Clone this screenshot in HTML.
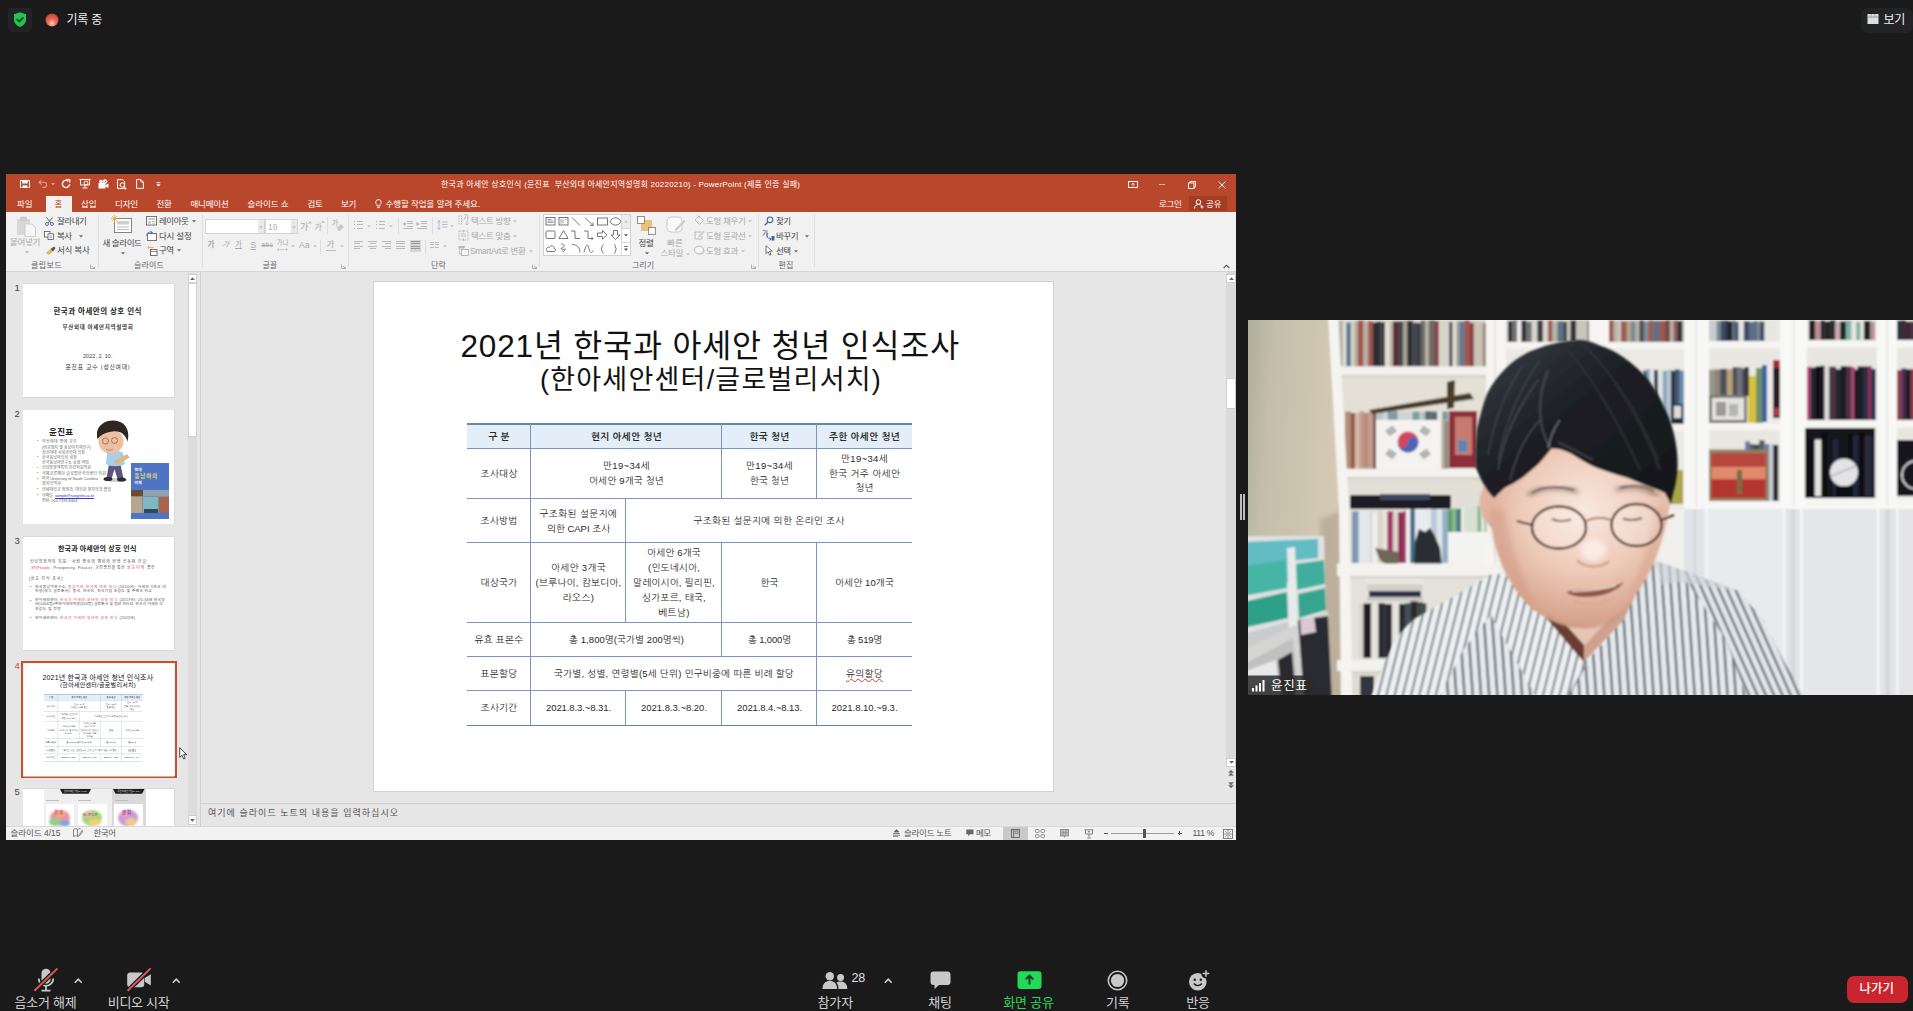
<!DOCTYPE html>
<html lang="ko">
<head>
<meta charset="utf-8">
<title>Zoom</title>
<style>
*{box-sizing:border-box;margin:0;padding:0}
html,body{width:1913px;height:1011px;overflow:hidden;background:#1a1a1a}
body{position:relative;font-family:"Liberation Sans","Noto Sans CJK KR",sans-serif;color:#fff}
.abs{position:absolute}
.k{font-family:"Liberation Sans","Noto Sans CJK KR",sans-serif}
.n{font-family:"Liberation Sans","NanumGothic","Noto Sans CJK KR",sans-serif}
/* ---------- PowerPoint window ---------- */
#ppt{position:absolute;left:6px;top:174px;width:1230px;height:666px;background:#e6e6e6;overflow:hidden;color:#444}
#ppt .title{position:absolute;left:0;top:0;width:1230px;height:38px;background:#b9472b}
#ppt .ribbon{position:absolute;left:0;top:38px;width:1230px;height:60px;background:#f1f1f2;border-bottom:1px solid #d4d4d6}
#ppt .t{position:absolute;white-space:nowrap;line-height:1}
/* ---------- slide ---------- */
/* ---------- thumbs ---------- */
/* ---------- zoom toolbar ---------- */
</style>
</head>
<body>

<!-- top-left status -->
<svg class="abs" style="left:8px;top:8px" width="24" height="24" viewBox="0 0 24 24"><rect x="0" y="0" width="24" height="24" rx="4" fill="#222325"/><path d="M12 4.2 L18 6.3 V11.5 C18 15 15.5 17.6 12 19 C8.500 17.6 6 15 6 11.500 V6.300 Z" fill="#23c552"/><path d="M9.3 11.600 L11.300 13.600 L14.900 9.900" stroke="#1f3d2a" stroke-width="1.700" fill="none" stroke-linecap="round" stroke-linejoin="round"/></svg>
<svg class="abs" style="left:44px;top:12px" width="16" height="16" viewBox="0 0 16 16"><defs><radialGradient id="rg" cx="50%" cy="75%" r="70%"><stop offset="0" stop-color="#ffd0c4"/><stop offset="0.450" stop-color="#e8695a"/><stop offset="1" stop-color="#c8473c"/></radialGradient></defs><circle cx="8" cy="8" r="6.500" fill="url(#rg)"/></svg>
<div class="abs k" style="left:66.500px;top:13.500px;font-size:12px;line-height:1;color:#f0f0f0;white-space:nowrap;letter-spacing:-0.200px">기록 중</div>

<!-- top-right view -->
<div class="abs" style="left:1861px;top:7.500px;width:52px;height:25px;border-radius:7px;background:#222325"></div>
<svg class="abs" style="left:1867px;top:13px" width="12" height="12" viewBox="0 0 12 12"><rect x="0.500" y="1" width="11" height="10" fill="#dedede"/><rect x="0.500" y="3.600" width="11" height="0.800" fill="#888"/><rect x="3.800" y="1" width="0.700" height="2.600" fill="#888"/><rect x="7.500" y="1" width="0.700" height="2.600" fill="#888"/></svg>
<div class="abs k" style="left:1883.500px;top:13.500px;font-size:12px;line-height:1;color:#f0f0f0;white-space:nowrap;letter-spacing:-0.300px">보기</div>

<!--PPT-->
<div id="ppt">
<div class="title"></div>
<div class="ribbon"></div>
<svg style="position:absolute;left:13.5px;top:5.5px;" width="10" height="8.5" viewBox="0 0 10 8.5"><path d="M0.5 0.5h9v7.5h-9z" fill="none" stroke="#fff" stroke-width="1"/><rect x="2.2" y="0.5" width="5.6" height="3" fill="#fff"/><rect x="2.5" y="5.4" width="5" height="2.6" fill="#fff"/></svg>
<svg style="position:absolute;left:32.0px;top:5.0px;" width="10" height="9" viewBox="0 0 10 9"><path d="M1 3.2h5a2.6 2.6 0 0 1 0 5.200h-1.500" fill="none" stroke="#e59b87" stroke-width="1.100"/><path d="M3.600 0.800L1 3.200l2.600 2.400" fill="none" stroke="#e59b87" stroke-width="1.100"/></svg>
<svg style="position:absolute;left:45.0px;top:9.0px;" width="4" height="3" viewBox="0 0 4 3"><path d="M0 0h4l-2 2.500z" fill="#e59b87"/></svg>
<svg style="position:absolute;left:54.5px;top:4.5px;" width="10" height="10" viewBox="0 0 10 10"><path d="M7.300 2.200A3.600 3.600 0 1 0 8.600 5" fill="none" stroke="#fff" stroke-width="1.300"/><path d="M5.300 0.300h3.400v3.400" fill="none" stroke="#fff" stroke-width="1.200"/></svg>
<svg style="position:absolute;left:73.0px;top:5.0px;" width="12" height="10" viewBox="0 0 12 10"><path d="M0.500 0.500h11M1.500 0.500v5.500h9v-5.500M6 6v2.500M3.500 9h5" stroke="#fff" stroke-width="1" fill="none"/><circle cx="7" cy="4" r="2" fill="none" stroke="#fff" stroke-width="0.900"/></svg>
<svg style="position:absolute;left:92.0px;top:4.5px;" width="11" height="10.5" viewBox="0 0 11 10.5"><rect x="0.500" y="4" width="7" height="5.500" fill="#fff"/><circle cx="3" cy="2.500" r="1.800" fill="#fff"/><circle cx="7" cy="2.500" r="2.300" fill="#fff"/><path d="M7.500 6l3-1.500v4.500l-3-1.500z" fill="#fff"/><path d="M5.800 2.500l1 1 1.700-2" stroke="#b9472b" stroke-width="0.800" fill="none"/></svg>
<svg style="position:absolute;left:111.0px;top:4.5px;" width="10" height="11" viewBox="0 0 10 11"><path d="M0.600 0.600h5l2 2v7h-7z" fill="none" stroke="#fff" stroke-width="1"/><circle cx="5.300" cy="6" r="2.200" fill="#b9472b" stroke="#fff" stroke-width="1"/><path d="M7 7.800l2.300 2.500" stroke="#fff" stroke-width="1.200"/></svg>
<svg style="position:absolute;left:129.5px;top:5.0px;" width="8" height="10" viewBox="0 0 8 10"><path d="M0.600 0.600h4.300l2.500 2.500v6.300h-6.800z" fill="none" stroke="#fff" stroke-width="1"/><path d="M4.900 0.600v2.500h2.500" fill="none" stroke="#fff" stroke-width="0.800"/></svg>
<svg style="position:absolute;left:150.0px;top:8.0px;" width="5" height="5" viewBox="0 0 5 5"><path d="M0.500 0.700h4" stroke="#fff" stroke-width="0.900"/><path d="M0.300 2.300h4.400l-2.200 2.300z" fill="#fff"/></svg>
<div style="position:absolute;left:435.0px;top:6.7px;font-size:8.0px;line-height:8.0px;color:#fff;white-space:nowrap;font-family:'Liberation Sans','Noto Sans CJK KR',sans-serif;letter-spacing:0.22px;white-space:pre;">한국과 아세안 상호인식 (윤진표  부산외대 아세안지역설명회 20220210) - PowerPoint (제품 인증 실패)</div>
<svg style="position:absolute;left:1121.5px;top:7.0px;" width="10" height="7" viewBox="0 0 10 7"><rect x="0.500" y="0.500" width="9" height="6" fill="none" stroke="#fff" stroke-width="1"/><path d="M5 5.500v-3M3.600 3.600l1.400-1.400 1.400 1.400" stroke="#fff" stroke-width="0.800" fill="none"/></svg>
<div style="position:absolute;left:1153.0px;top:10.0px;width:6.0px;height:1.0px;background:#e9b5a6;"></div>
<svg style="position:absolute;left:1182.0px;top:6.5px;" width="8" height="8" viewBox="0 0 8 8"><rect x="0.500" y="2" width="5.500" height="5.500" fill="none" stroke="#fff" stroke-width="0.900"/><path d="M2 2v-1.500h5.500v5.500h-1.500" fill="none" stroke="#fff" stroke-width="0.900"/></svg>
<svg style="position:absolute;left:1211.5px;top:6.5px;" width="8" height="8" viewBox="0 0 8 8"><path d="M0.700 0.700l6.600 6.600M7.300 0.700l-6.600 6.600" stroke="#fff" stroke-width="1"/></svg>
<div style="position:absolute;left:40.0px;top:22.0px;width:25.5px;height:16.0px;background:#f1f1f2;"></div>
<div style="position:absolute;left:11.0px;top:25.5px;font-size:8.5px;line-height:8.5px;color:#fff;white-space:nowrap;font-family:'Liberation Sans','Noto Sans CJK KR',sans-serif;letter-spacing:-0.07px;">파일</div>
<div style="position:absolute;left:48.5px;top:25.5px;font-size:8.5px;line-height:8.5px;color:#b9472b;white-space:nowrap;font-family:'Liberation Sans','Noto Sans CJK KR',sans-serif;letter-spacing:0.17px;">홈</div>
<div style="position:absolute;left:75.0px;top:25.5px;font-size:8.5px;line-height:8.5px;color:#fff;white-space:nowrap;font-family:'Liberation Sans','Noto Sans CJK KR',sans-serif;letter-spacing:-0.07px;">삽입</div>
<div style="position:absolute;left:109.0px;top:25.5px;font-size:8.5px;line-height:8.5px;color:#fff;white-space:nowrap;font-family:'Liberation Sans','Noto Sans CJK KR',sans-serif;letter-spacing:-0.16px;">디자인</div>
<div style="position:absolute;left:150.5px;top:25.5px;font-size:8.5px;line-height:8.5px;color:#fff;white-space:nowrap;font-family:'Liberation Sans','Noto Sans CJK KR',sans-serif;letter-spacing:-0.32px;">전환</div>
<div style="position:absolute;left:184.5px;top:25.5px;font-size:8.5px;line-height:8.5px;color:#fff;white-space:nowrap;font-family:'Liberation Sans','Noto Sans CJK KR',sans-serif;letter-spacing:-0.22px;">애니메이션</div>
<div style="position:absolute;left:241.5px;top:25.5px;font-size:8.5px;line-height:8.5px;color:#fff;white-space:nowrap;font-family:'Liberation Sans','Noto Sans CJK KR',sans-serif;letter-spacing:-0.08px;">슬라이드 쇼</div>
<div style="position:absolute;left:301.5px;top:25.5px;font-size:8.5px;line-height:8.5px;color:#fff;white-space:nowrap;font-family:'Liberation Sans','Noto Sans CJK KR',sans-serif;letter-spacing:-0.32px;">검토</div>
<div style="position:absolute;left:335.0px;top:25.5px;font-size:8.5px;line-height:8.5px;color:#fff;white-space:nowrap;font-family:'Liberation Sans','Noto Sans CJK KR',sans-serif;letter-spacing:-0.32px;">보기</div>
<svg style="position:absolute;left:369.0px;top:24.5px;" width="7" height="10" viewBox="0 0 7 10"><path d="M3.500 0.600a2.700 2.700 0 0 1 1.500 5v1.400h-3v-1.400a2.700 2.700 0 0 1 1.500-5z" fill="none" stroke="#fff" stroke-width="0.900"/><path d="M2.300 8.600h2.400" stroke="#fff" stroke-width="0.900"/></svg>
<div style="position:absolute;left:379.5px;top:25.5px;font-size:8.5px;line-height:8.5px;color:#fff;white-space:nowrap;font-family:'Liberation Sans','Noto Sans CJK KR',sans-serif;letter-spacing:-0.06px;">수행할 작업을 알려 주세요.</div>
<div style="position:absolute;left:1153.0px;top:25.5px;font-size:8.5px;line-height:8.5px;color:#fff;white-space:nowrap;font-family:'Liberation Sans','Noto Sans CJK KR',sans-serif;letter-spacing:-0.32px;">로그인</div>
<div style="position:absolute;left:1182.5px;top:21.5px;width:38.0px;height:15.0px;background:#a23c22;"></div>
<svg style="position:absolute;left:1187.5px;top:24.5px;" width="10" height="10" viewBox="0 0 10 10"><circle cx="4.500" cy="3" r="2.300" fill="none" stroke="#fff" stroke-width="1"/><path d="M0.600 9.500c0-3 1.800-4 3.900-4s2.500 0.600 3 1.300" fill="none" stroke="#fff" stroke-width="1"/><path d="M8 6.500v3M6.500 8h3" stroke="#fff" stroke-width="0.900"/></svg>
<div style="position:absolute;left:1200.0px;top:25.5px;font-size:8.5px;line-height:8.5px;color:#fff;white-space:nowrap;font-family:'Liberation Sans','Noto Sans CJK KR',sans-serif;letter-spacing:-0.07px;">공유</div>

<div style="position:absolute;left:91.5px;top:41.0px;width:1.0px;height:52.0px;background:#dedede;"></div>
<div style="position:absolute;left:196.0px;top:41.0px;width:1.0px;height:52.0px;background:#dedede;"></div>
<div style="position:absolute;left:342.0px;top:41.0px;width:1.0px;height:52.0px;background:#dedede;"></div>
<div style="position:absolute;left:533.0px;top:41.0px;width:1.0px;height:52.0px;background:#dedede;"></div>
<div style="position:absolute;left:752.0px;top:41.0px;width:1.0px;height:52.0px;background:#dedede;"></div>
<div style="position:absolute;left:807.5px;top:41.0px;width:1.0px;height:52.0px;background:#dedede;"></div>
<div style="position:absolute;left:25.0px;top:87.7px;font-size:8.0px;line-height:8.0px;color:#666;white-space:nowrap;font-family:'Liberation Sans','Noto Sans CJK KR',sans-serif;letter-spacing:0.39px;">클립보드</div>
<div style="position:absolute;left:128.0px;top:87.7px;font-size:8.0px;line-height:8.0px;color:#666;white-space:nowrap;font-family:'Liberation Sans','Noto Sans CJK KR',sans-serif;letter-spacing:0.14px;">슬라이드</div>
<div style="position:absolute;left:256.5px;top:87.7px;font-size:8.0px;line-height:8.0px;color:#666;white-space:nowrap;font-family:'Liberation Sans','Noto Sans CJK KR',sans-serif;letter-spacing:-0.12px;">글꼴</div>
<div style="position:absolute;left:425.0px;top:87.7px;font-size:8.0px;line-height:8.0px;color:#666;white-space:nowrap;font-family:'Liberation Sans','Noto Sans CJK KR',sans-serif;letter-spacing:0.13px;">단락</div>
<div style="position:absolute;left:626.0px;top:87.7px;font-size:8.0px;line-height:8.0px;color:#666;white-space:nowrap;font-family:'Liberation Sans','Noto Sans CJK KR',sans-serif;letter-spacing:-0.03px;">그리기</div>
<div style="position:absolute;left:772.5px;top:87.7px;font-size:8.0px;line-height:8.0px;color:#666;white-space:nowrap;font-family:'Liberation Sans','Noto Sans CJK KR',sans-serif;letter-spacing:0.13px;">편집</div>
<svg style="position:absolute;left:83.5px;top:89.5px;" width="5" height="5" viewBox="0 0 5 5"><path d="M0.500 0.500h4v4" fill="none" stroke="#999" stroke-width="0.700" transform="rotate(180 2.500 2.500)"/><path d="M2 2l2.500 2.500M4.500 2.800v1.700h-1.700" stroke="#999" stroke-width="0.700" fill="none"/></svg>
<svg style="position:absolute;left:334.5px;top:89.5px;" width="5" height="5" viewBox="0 0 5 5"><path d="M0.500 0.500h4v4" fill="none" stroke="#999" stroke-width="0.700" transform="rotate(180 2.500 2.500)"/><path d="M2 2l2.500 2.500M4.500 2.800v1.700h-1.700" stroke="#999" stroke-width="0.700" fill="none"/></svg>
<svg style="position:absolute;left:525.5px;top:89.5px;" width="5" height="5" viewBox="0 0 5 5"><path d="M0.500 0.500h4v4" fill="none" stroke="#999" stroke-width="0.700" transform="rotate(180 2.500 2.500)"/><path d="M2 2l2.500 2.500M4.500 2.800v1.700h-1.700" stroke="#999" stroke-width="0.700" fill="none"/></svg>
<svg style="position:absolute;left:744.5px;top:89.5px;" width="5" height="5" viewBox="0 0 5 5"><path d="M0.500 0.500h4v4" fill="none" stroke="#999" stroke-width="0.700" transform="rotate(180 2.500 2.500)"/><path d="M2 2l2.500 2.500M4.500 2.800v1.700h-1.700" stroke="#999" stroke-width="0.700" fill="none"/></svg>
<svg style="position:absolute;left:1216.5px;top:90.0px;" width="7" height="5" viewBox="0 0 7 5"><path d="M0.700 4l2.800-2.800 2.800 2.800" fill="none" stroke="#555" stroke-width="1.100"/></svg>
<svg style="position:absolute;left:10.0px;top:42.0px;" width="21" height="21" viewBox="0 0 21 21"><rect x="1" y="3" width="13" height="16" rx="1" fill="#d9d9d9"/><rect x="4.500" y="1" width="6" height="4" rx="1" fill="#cfcfcf" stroke="#bdbdbd" stroke-width="0.600"/><path d="M9 8h7l3.500 3.500v9h-10.500z" fill="#f6f6f6" stroke="#c4c4c4" stroke-width="0.800"/></svg>
<div style="position:absolute;left:4.0px;top:64.0px;font-size:8.5px;line-height:8.5px;color:#a9a9a9;white-space:nowrap;font-family:'Liberation Sans','Noto Sans CJK KR',sans-serif;letter-spacing:-0.32px;">붙여넣기</div>
<svg style="position:absolute;left:18.5px;top:77.0px;" width="4" height="3" viewBox="0 0 4 3"><path d="M0 0.300h4l-2 2.200z" fill="#b5b5b5"/></svg>
<svg style="position:absolute;left:38.5px;top:42.5px;" width="9" height="9" viewBox="0 0 9 9"><path d="M1.500 0.500l4.500 5.500M7.500 0.500l-4.500 5.500" stroke="#555" stroke-width="0.900"/><circle cx="2" cy="7" r="1.500" fill="none" stroke="#41649a" stroke-width="0.900"/><circle cx="7" cy="7" r="1.500" fill="none" stroke="#41649a" stroke-width="0.900"/></svg>
<div style="position:absolute;left:51.0px;top:43.0px;font-size:8.5px;line-height:8.5px;color:#444;white-space:nowrap;font-family:'Liberation Sans','Noto Sans CJK KR',sans-serif;letter-spacing:-0.45px;">잘라내기</div>
<svg style="position:absolute;left:38.0px;top:57.0px;" width="11" height="9" viewBox="0 0 11 9"><rect x="0.500" y="0.500" width="5.500" height="5.500" fill="#fff" stroke="#555" stroke-width="0.800"/><rect x="4" y="2.800" width="5.500" height="5.700" fill="#fff" stroke="#555" stroke-width="0.800"/><path d="M5.500 5h2.500M5.500 6.700h2.500" stroke="#41649a" stroke-width="0.600"/></svg>
<div style="position:absolute;left:51.0px;top:57.5px;font-size:8.5px;line-height:8.5px;color:#444;white-space:nowrap;font-family:'Liberation Sans','Noto Sans CJK KR',sans-serif;letter-spacing:-0.57px;">복사</div>
<svg style="position:absolute;left:72.5px;top:60.5px;" width="4" height="3" viewBox="0 0 4 3"><path d="M0 0.300h4l-2 2.200z" fill="#666"/></svg>
<svg style="position:absolute;left:39.0px;top:71.5px;" width="11" height="10" viewBox="0 0 11 10"><path d="M1 6.500l4.500-3.500 2.500 2.500-4.500 3.500z" fill="#e2b85c"/><path d="M5.500 3l3.500-2.500 1.500 1.500-2.500 3.500z" fill="#555"/></svg>
<div style="position:absolute;left:51.0px;top:72.0px;font-size:8.5px;line-height:8.5px;color:#444;white-space:nowrap;font-family:'Liberation Sans','Noto Sans CJK KR',sans-serif;letter-spacing:-0.23px;">서식 복사</div>
<svg style="position:absolute;left:105.0px;top:40.5px;" width="22" height="19" viewBox="0 0 22 19"><rect x="3.500" y="3.500" width="17" height="14" fill="#fff" stroke="#777" stroke-width="0.900"/><rect x="6" y="6" width="12" height="3.500" fill="#cfcfcf"/><path d="M6 12h12M6 14.500h12" stroke="#aaa" stroke-width="0.800"/><path d="M3.500 0v7M0 3.500h7M1 1l5 5M6 1l-5 5" stroke="#e8b33a" stroke-width="0.800"/></svg>
<div style="position:absolute;left:96.5px;top:64.5px;font-size:8.5px;line-height:8.5px;color:#444;white-space:nowrap;font-family:'Liberation Sans','Noto Sans CJK KR',sans-serif;letter-spacing:-0.41px;">새 슬라이드</div>
<svg style="position:absolute;left:115.0px;top:77.5px;" width="4" height="3" viewBox="0 0 4 3"><path d="M0 0.300h4l-2 2.200z" fill="#666"/></svg>
<svg style="position:absolute;left:140.0px;top:42.0px;" width="11" height="10" viewBox="0 0 11 10"><rect x="0.500" y="0.500" width="10" height="8.500" fill="#fff" stroke="#666" stroke-width="0.900"/><rect x="2" y="2.200" width="7" height="1.600" fill="#bbb"/><rect x="2" y="5" width="3" height="2.800" fill="#ccc"/><path d="M6 5.500h3M6 7.200h3" stroke="#999" stroke-width="0.600"/></svg>
<div style="position:absolute;left:153.0px;top:43.0px;font-size:8.5px;line-height:8.5px;color:#444;white-space:nowrap;font-family:'Liberation Sans','Noto Sans CJK KR',sans-serif;letter-spacing:-0.45px;">레이아웃</div>
<svg style="position:absolute;left:185.5px;top:46.0px;" width="4" height="3" viewBox="0 0 4 3"><path d="M0 0.300h4l-2 2.200z" fill="#666"/></svg>
<svg style="position:absolute;left:140.0px;top:56.5px;" width="11" height="10" viewBox="0 0 11 10"><rect x="1.500" y="2.500" width="9" height="7" fill="#fff" stroke="#666" stroke-width="0.900"/><path d="M0.500 4.500a4 4 0 0 1 6-3" fill="none" stroke="#3b78c0" stroke-width="1"/><path d="M5 0l2 1.700-2.300 1" fill="#3b78c0"/></svg>
<div style="position:absolute;left:153.0px;top:57.5px;font-size:8.5px;line-height:8.5px;color:#444;white-space:nowrap;font-family:'Liberation Sans','Noto Sans CJK KR',sans-serif;letter-spacing:-0.23px;">다시 설정</div>
<svg style="position:absolute;left:140.5px;top:71.5px;" width="11" height="10" viewBox="0 0 11 10"><rect x="3.500" y="3.500" width="6.500" height="6" fill="#fff" stroke="#666" stroke-width="0.900"/><path d="M3.500 5.500h6.500" stroke="#666" stroke-width="0.700"/><path d="M0.500 1.500h6" stroke="#e8b33a" stroke-width="1"/><path d="M1.500 0v3" stroke="#e8b33a" stroke-width="0.800"/></svg>
<div style="position:absolute;left:153.0px;top:72.0px;font-size:8.5px;line-height:8.5px;color:#444;white-space:nowrap;font-family:'Liberation Sans','Noto Sans CJK KR',sans-serif;letter-spacing:-0.57px;">구역</div>
<svg style="position:absolute;left:171.0px;top:75.0px;" width="4" height="3" viewBox="0 0 4 3"><path d="M0 0.300h4l-2 2.200z" fill="#666"/></svg>
<div style="position:absolute;left:199.0px;top:45.0px;width:59.5px;height:14.5px;background:#fff;border:1px solid #d4d4d4;"></div>
<div style="position:absolute;left:251.5px;top:46.0px;width:6.0px;height:12.5px;background:#e9e9e9;"></div>
<svg style="position:absolute;left:252.5px;top:51.5px;" width="4" height="3" viewBox="0 0 4 3"><path d="M0 0.300h4l-2 2.200z" fill="#bbb"/></svg>
<div style="position:absolute;left:259.0px;top:45.0px;width:32.5px;height:14.5px;background:#fff;border:1px solid #d4d4d4;"></div>
<div style="position:absolute;left:284.5px;top:46.0px;width:6.0px;height:12.5px;background:#e9e9e9;"></div>
<svg style="position:absolute;left:285.5px;top:51.5px;" width="4" height="3" viewBox="0 0 4 3"><path d="M0 0.300h4l-2 2.200z" fill="#bbb"/></svg>
<div style="position:absolute;left:262.0px;top:48.5px;font-size:8.5px;line-height:8.5px;color:#b4b4b4;white-space:nowrap;font-family:'Liberation Sans','Noto Sans CJK KR',sans-serif;letter-spacing:0.02px;">19</div>
<div style="position:absolute;left:294.0px;top:48.7px;font-size:9.0px;line-height:9.0px;color:#a9a9a9;white-space:nowrap;font-family:'Liberation Sans','Noto Sans CJK KR',sans-serif;letter-spacing:0.72px;">가</div>
<svg style="position:absolute;left:301.5px;top:46.5px;" width="4" height="3" viewBox="0 0 4 3"><path d="M0 2.500l2-2.200 2 2.200z" fill="#bbb"/></svg>
<div style="position:absolute;left:308.5px;top:49.7px;font-size:8.0px;line-height:8.0px;color:#a9a9a9;white-space:nowrap;font-family:'Liberation Sans','Noto Sans CJK KR',sans-serif;letter-spacing:0.12px;">가</div>
<svg style="position:absolute;left:314.5px;top:46.5px;" width="4" height="3" viewBox="0 0 4 3"><path d="M0 0.300h4l-2 2.200z" fill="#bbb"/></svg>
<div style="position:absolute;left:321.0px;top:43.0px;width:1.0px;height:17.0px;background:#dedede;"></div>
<div style="position:absolute;left:325.5px;top:45.9px;font-size:7.5px;line-height:7.5px;color:#a9a9a9;white-space:nowrap;font-family:'Liberation Sans','Noto Sans CJK KR',sans-serif;letter-spacing:0.09px;">가</div>
<svg style="position:absolute;left:329.5px;top:49.0px;" width="9" height="8" viewBox="0 0 9 8"><path d="M1 5l4-4 3 3-4 4h-2z" fill="#c9c9c9"/></svg>
<div style="position:absolute;left:201.5px;top:67.4px;font-size:7.5px;line-height:7.5px;color:#a9a9a9;white-space:nowrap;font-family:'Liberation Sans','Noto Sans CJK KR',sans-serif;font-weight:bold;letter-spacing:0.09px;">가</div>
<div style="position:absolute;left:215.5px;top:67.4px;font-size:7.5px;line-height:7.5px;color:#a9a9a9;white-space:nowrap;font-family:'Liberation Sans','Noto Sans CJK KR',sans-serif;letter-spacing:-1.50px;font-style:italic;transform:skewX(-12deg);">가</div>
<div style="position:absolute;left:229.0px;top:66.9px;font-size:7.5px;line-height:7.5px;color:#a9a9a9;white-space:nowrap;font-family:'Liberation Sans','Noto Sans CJK KR',sans-serif;letter-spacing:0.09px;text-decoration:underline;">가</div>
<div style="position:absolute;left:244.5px;top:67.0px;font-size:8.5px;line-height:8.5px;color:#a9a9a9;white-space:nowrap;font-family:'Liberation Sans','Noto Sans CJK KR',sans-serif;letter-spacing:-0.17px;text-decoration:underline;">S</div>
<div style="position:absolute;left:255.5px;top:68.4px;font-size:6.5px;line-height:6.5px;color:#a9a9a9;white-space:nowrap;font-family:'Liberation Sans','Noto Sans CJK KR',sans-serif;letter-spacing:0.34px;text-decoration:line-through;">abc</div>
<div style="position:absolute;left:270.5px;top:65.9px;font-size:6.5px;line-height:6.5px;color:#a9a9a9;white-space:nowrap;font-family:'Liberation Sans','Noto Sans CJK KR',sans-serif;letter-spacing:0.02px;">가나</div>
<svg style="position:absolute;left:271.0px;top:74.0px;" width="11" height="3" viewBox="0 0 11 3"><path d="M0.500 1.500h10M2 0l-1.500 1.500 1.500 1.500M9 0l1.500 1.500-1.500 1.500" stroke="#bbb" stroke-width="0.700" fill="none"/></svg>
<svg style="position:absolute;left:285.0px;top:70.5px;" width="4" height="3" viewBox="0 0 4 3"><path d="M0 0.300h4l-2 2.200z" fill="#c4c4c4"/></svg>
<div style="position:absolute;left:293.0px;top:67.0px;font-size:8.5px;line-height:8.5px;color:#a9a9a9;white-space:nowrap;font-family:'Liberation Sans','Noto Sans CJK KR',sans-serif;letter-spacing:0.30px;">Aa</div>
<svg style="position:absolute;left:307.0px;top:70.5px;" width="4" height="3" viewBox="0 0 4 3"><path d="M0 0.300h4l-2 2.200z" fill="#c4c4c4"/></svg>
<div style="position:absolute;left:314.0px;top:65.5px;width:1.0px;height:14.0px;background:#dedede;"></div>
<div style="position:absolute;left:320.5px;top:65.5px;font-size:8.5px;line-height:8.5px;color:#a9a9a9;white-space:nowrap;font-family:'Liberation Sans','Noto Sans CJK KR',sans-serif;letter-spacing:0.67px;">가</div>
<div style="position:absolute;left:320.0px;top:75.5px;width:10.0px;height:1.3px;background:#bdbdbd;"></div>
<svg style="position:absolute;left:333.5px;top:70.5px;" width="4" height="3" viewBox="0 0 4 3"><path d="M0 0.300h4l-2 2.200z" fill="#c4c4c4"/></svg>
<div style="position:absolute;left:348.0px;top:46.5px;width:1.3px;height:1.3px;background:#b0b0b0;"></div>
<div style="position:absolute;left:351.0px;top:46.7px;width:6.0px;height:0.9px;background:#b9b9b9;"></div>
<div style="position:absolute;left:348.0px;top:50.0px;width:1.3px;height:1.3px;background:#b0b0b0;"></div>
<div style="position:absolute;left:351.0px;top:50.2px;width:6.0px;height:0.9px;background:#b9b9b9;"></div>
<div style="position:absolute;left:348.0px;top:53.5px;width:1.3px;height:1.3px;background:#b0b0b0;"></div>
<div style="position:absolute;left:351.0px;top:53.7px;width:6.0px;height:0.9px;background:#b9b9b9;"></div>
<svg style="position:absolute;left:361.0px;top:51.0px;" width="4" height="3" viewBox="0 0 4 3"><path d="M0 0.300h4l-2 2.200z" fill="#c4c4c4"/></svg>
<div style="position:absolute;left:369.5px;top:46.5px;width:1.3px;height:1.3px;background:#b0b0b0;"></div>
<div style="position:absolute;left:372.5px;top:46.7px;width:6.0px;height:0.9px;background:#b9b9b9;"></div>
<div style="position:absolute;left:369.5px;top:50.0px;width:1.3px;height:1.3px;background:#b0b0b0;"></div>
<div style="position:absolute;left:372.5px;top:50.2px;width:6.0px;height:0.9px;background:#b9b9b9;"></div>
<div style="position:absolute;left:369.5px;top:53.5px;width:1.3px;height:1.3px;background:#b0b0b0;"></div>
<div style="position:absolute;left:372.5px;top:53.7px;width:6.0px;height:0.9px;background:#b9b9b9;"></div>
<svg style="position:absolute;left:383.0px;top:51.0px;" width="4" height="3" viewBox="0 0 4 3"><path d="M0 0.300h4l-2 2.200z" fill="#c4c4c4"/></svg>
<div style="position:absolute;left:391.5px;top:43.0px;width:1.0px;height:17.0px;background:#dedede;"></div>
<div style="position:absolute;left:400.5px;top:46.5px;width:6.0px;height:0.9px;background:#b9b9b9;"></div>
<div style="position:absolute;left:400.5px;top:49.1px;width:6.0px;height:0.9px;background:#b9b9b9;"></div>
<div style="position:absolute;left:400.5px;top:51.7px;width:6.0px;height:0.9px;background:#b9b9b9;"></div>
<div style="position:absolute;left:396.5px;top:54.3px;width:10.0px;height:0.9px;background:#b9b9b9;"></div>
<svg style="position:absolute;left:396.0px;top:48.0px;" width="4" height="4" viewBox="0 0 4 4"><path d="M3.500 0l-3 2 3 2z" fill="#9fb4d0"/></svg>
<div style="position:absolute;left:414.5px;top:46.5px;width:6.0px;height:0.9px;background:#b9b9b9;"></div>
<div style="position:absolute;left:414.5px;top:49.1px;width:6.0px;height:0.9px;background:#b9b9b9;"></div>
<div style="position:absolute;left:414.5px;top:51.7px;width:6.0px;height:0.9px;background:#b9b9b9;"></div>
<div style="position:absolute;left:410.5px;top:54.3px;width:10.0px;height:0.9px;background:#b9b9b9;"></div>
<svg style="position:absolute;left:410.0px;top:48.0px;" width="4" height="4" viewBox="0 0 4 4"><path d="M0.500 0l3 2-3 2z" fill="#9fb4d0"/></svg>
<div style="position:absolute;left:425.5px;top:43.0px;width:1.0px;height:17.0px;background:#dedede;"></div>
<svg style="position:absolute;left:430.5px;top:46.0px;" width="11" height="10" viewBox="0 0 11 10"><path d="M2 0.500v9M0.500 2.500l1.500-2 1.500 2M0.500 7.500l1.500 2 1.500-2" stroke="#9fb4d0" stroke-width="0.800" fill="none"/><path d="M5 2h5.500M5 4.500h5.500M5 7h5.500" stroke="#b9b9b9" stroke-width="0.900"/></svg>
<svg style="position:absolute;left:444.0px;top:51.0px;" width="4" height="3" viewBox="0 0 4 3"><path d="M0 0.300h4l-2 2.200z" fill="#c4c4c4"/></svg>
<div style="position:absolute;left:348.0px;top:67.0px;width:9.0px;height:0.9px;background:#b9b9b9;"></div>
<div style="position:absolute;left:348.0px;top:69.4px;width:6.0px;height:0.9px;background:#b9b9b9;"></div>
<div style="position:absolute;left:348.0px;top:71.8px;width:9.0px;height:0.9px;background:#b9b9b9;"></div>
<div style="position:absolute;left:348.0px;top:74.2px;width:6.0px;height:0.9px;background:#b9b9b9;"></div>
<div style="position:absolute;left:362.0px;top:67.0px;width:9.0px;height:0.9px;background:#b9b9b9;"></div>
<div style="position:absolute;left:363.5px;top:69.4px;width:6.0px;height:0.9px;background:#b9b9b9;"></div>
<div style="position:absolute;left:362.0px;top:71.8px;width:9.0px;height:0.9px;background:#b9b9b9;"></div>
<div style="position:absolute;left:363.5px;top:74.2px;width:6.0px;height:0.9px;background:#b9b9b9;"></div>
<div style="position:absolute;left:376.0px;top:67.0px;width:9.0px;height:0.9px;background:#b9b9b9;"></div>
<div style="position:absolute;left:379.0px;top:69.4px;width:6.0px;height:0.9px;background:#b9b9b9;"></div>
<div style="position:absolute;left:376.0px;top:71.8px;width:9.0px;height:0.9px;background:#b9b9b9;"></div>
<div style="position:absolute;left:379.0px;top:74.2px;width:6.0px;height:0.9px;background:#b9b9b9;"></div>
<div style="position:absolute;left:390.0px;top:67.0px;width:9.0px;height:0.9px;background:#b9b9b9;"></div>
<div style="position:absolute;left:390.0px;top:69.4px;width:9.0px;height:0.9px;background:#b9b9b9;"></div>
<div style="position:absolute;left:390.0px;top:71.8px;width:9.0px;height:0.9px;background:#b9b9b9;"></div>
<div style="position:absolute;left:390.0px;top:74.2px;width:9.0px;height:0.9px;background:#b9b9b9;"></div>
<div style="position:absolute;left:403.5px;top:65.5px;width:11.0px;height:12.0px;background:#d6d6d6;"></div>
<div style="position:absolute;left:404.5px;top:67.0px;width:9.0px;height:0.9px;background:#999;"></div>
<div style="position:absolute;left:404.5px;top:69.4px;width:9.0px;height:0.9px;background:#999;"></div>
<div style="position:absolute;left:404.5px;top:71.8px;width:9.0px;height:0.9px;background:#999;"></div>
<div style="position:absolute;left:404.5px;top:74.2px;width:9.0px;height:0.9px;background:#999;"></div>
<div style="position:absolute;left:418.5px;top:65.5px;width:1.0px;height:14.0px;background:#dedede;"></div>
<div style="position:absolute;left:424.0px;top:67.5px;width:3.5px;height:0.9px;background:#b9b9b9;"></div>
<div style="position:absolute;left:424.0px;top:70.1px;width:3.5px;height:0.9px;background:#b9b9b9;"></div>
<div style="position:absolute;left:424.0px;top:72.7px;width:3.5px;height:0.9px;background:#b9b9b9;"></div>
<div style="position:absolute;left:429.0px;top:67.5px;width:3.5px;height:0.9px;background:#b9b9b9;"></div>
<div style="position:absolute;left:429.0px;top:70.1px;width:3.5px;height:0.9px;background:#b9b9b9;"></div>
<div style="position:absolute;left:429.0px;top:72.7px;width:3.5px;height:0.9px;background:#b9b9b9;"></div>
<svg style="position:absolute;left:437.0px;top:70.5px;" width="4" height="3" viewBox="0 0 4 3"><path d="M0 0.300h4l-2 2.200z" fill="#c4c4c4"/></svg>
<svg style="position:absolute;left:451.5px;top:41.0px;" width="11" height="11" viewBox="0 0 11 11"><path d="M1 0.500v9M3.500 0.500v9" stroke="#a8a8a8" stroke-width="0.800" stroke-dasharray="1.500 1"/><path d="M9 6v4M7.500 8.500l1.500 1.500 1.500-1.500" stroke="#9fb4d0" stroke-width="0.800" fill="none"/></svg>
<div style="position:absolute;left:457.0px;top:41.4px;font-size:6.5px;line-height:6.5px;color:#a9a9a9;white-space:nowrap;font-family:'Liberation Sans','Noto Sans CJK KR',sans-serif;letter-spacing:0.02px;">가</div>
<div style="position:absolute;left:465.0px;top:42.5px;font-size:8.5px;line-height:8.5px;color:#a9a9a9;white-space:nowrap;font-family:'Liberation Sans','Noto Sans CJK KR',sans-serif;letter-spacing:-0.33px;">텍스트 방향</div>
<svg style="position:absolute;left:507.0px;top:45.5px;" width="4" height="3" viewBox="0 0 4 3"><path d="M0 0.300h4l-2 2.200z" fill="#c4c4c4"/></svg>
<svg style="position:absolute;left:451.5px;top:56.0px;" width="11" height="11" viewBox="0 0 11 11"><rect x="1" y="1" width="9" height="9" fill="none" stroke="#a8a8a8" stroke-width="0.800" stroke-dasharray="1.500 1"/><path d="M3 4h5M3 6h5" stroke="#b9b9b9" stroke-width="0.800"/><path d="M5.500 0v2.500M5.500 11v-2.500" stroke="#9fb4d0" stroke-width="0.800"/></svg>
<div style="position:absolute;left:465.0px;top:57.5px;font-size:8.5px;line-height:8.5px;color:#a9a9a9;white-space:nowrap;font-family:'Liberation Sans','Noto Sans CJK KR',sans-serif;letter-spacing:-0.33px;">텍스트 맞춤</div>
<svg style="position:absolute;left:507.0px;top:60.5px;" width="4" height="3" viewBox="0 0 4 3"><path d="M0 0.300h4l-2 2.200z" fill="#c4c4c4"/></svg>
<svg style="position:absolute;left:451.5px;top:71.0px;" width="11" height="11" viewBox="0 0 11 11"><path d="M0.500 1h7l-1.500 2.500h-5.500z" fill="#b9b9b9"/><rect x="3.500" y="4.500" width="7" height="6" fill="#f6f6f6" stroke="#a8a8a8" stroke-width="0.800"/><path d="M1.500 4v5h2" fill="none" stroke="#a8a8a8" stroke-width="0.700"/></svg>
<div style="position:absolute;left:464.0px;top:72.5px;font-size:8.5px;line-height:8.5px;color:#a9a9a9;white-space:nowrap;font-family:'Liberation Sans','Noto Sans CJK KR',sans-serif;letter-spacing:-0.32px;">SmartArt로 변환</div>
<svg style="position:absolute;left:522.5px;top:75.5px;" width="4" height="3" viewBox="0 0 4 3"><path d="M0 0.300h4l-2 2.200z" fill="#c4c4c4"/></svg>
<div style="position:absolute;left:537.0px;top:40.0px;width:87.5px;height:41.5px;background:#fff;border:1px solid #d0d0d0;"></div>
<div style="position:absolute;left:615.0px;top:41.0px;width:8.5px;height:13.0px;background:#ececec;"></div>
<div style="position:absolute;left:615.0px;top:54.0px;width:8.5px;height:1.0px;background:#d9d9d9;"></div>
<div style="position:absolute;left:615.0px;top:67.5px;width:8.5px;height:1.0px;background:#d9d9d9;"></div>
<div style="position:absolute;left:614.5px;top:41.0px;width:1.0px;height:39.5px;background:#d9d9d9;"></div>
<svg style="position:absolute;left:617.5px;top:46.0px;" width="4" height="3" viewBox="0 0 4 3"><path d="M0 2.500l2-2.200 2 2.200z" fill="#c4c4c4"/></svg>
<svg style="position:absolute;left:617.5px;top:59.5px;" width="4" height="3" viewBox="0 0 4 3"><path d="M0 0.300h4l-2 2.200z" fill="#555"/></svg>
<svg style="position:absolute;left:617.5px;top:71.5px;" width="4" height="6" viewBox="0 0 4 6"><path d="M0 0.500h4" stroke="#555" stroke-width="0.800"/><path d="M0 2.500h4l-2 2.500z" fill="#555"/></svg>
<svg style="position:absolute;left:537.5px;top:40.5px;" width="78" height="41" viewBox="0 0 78 41"><rect x="2" y="2.500" width="9" height="7.500" fill="none" stroke="#555" stroke-width="0.800"/><path d="M3.500 4.500h4M3.500 6h6M3.500 7.500h6" stroke="#41649a" stroke-width="0.600"/><rect x="15" y="2.500" width="9" height="7.500" fill="none" stroke="#555" stroke-width="0.800"/><path d="M17 4v4.500M19 4v4.500M21 4.500h1.500" stroke="#41649a" stroke-width="0.600"/><path d="M28 2.500l8 8" stroke="#555" stroke-width="0.800"/><path d="M41 2.500l8 8M49 7.500v3h-3" stroke="#555" stroke-width="0.800" fill="none"/><rect x="53.500" y="3" width="10" height="7" fill="none" stroke="#555" stroke-width="0.800"/><ellipse cx="71.500" cy="6.500" rx="5" ry="3.600" fill="none" stroke="#555" stroke-width="0.800"/><rect x="2" y="16" width="9" height="7.500" rx="1" fill="none" stroke="#555" stroke-width="0.800"/><path d="M19.500 15.500l4.500 8h-9z" fill="none" stroke="#555" stroke-width="0.800"/><path d="M27 16h4v7.500h5" fill="none" stroke="#555" stroke-width="0.800"/><path d="M40 16h4v7.500h5M47.500 22l1.500 1.500-1.500 1.500" fill="none" stroke="#555" stroke-width="0.800"/><path d="M53.500 18h5v-2.500l4.500 4.300-4.500 4.300v-2.500h-5z" fill="none" stroke="#555" stroke-width="0.800"/><path d="M69.500 15.500h4v4.500h2.500l-4.500 4.500-4.500-4.500h2.500z" fill="none" stroke="#555" stroke-width="0.800"/><path d="M3 36.500c-2-3 1-5 2.500-4 1-3 5-2 4.500 1 2 0 2 3 0 3z" fill="none" stroke="#555" stroke-width="0.800"/><path d="M17 29c4 0 4 3 1 4s2 2 3 1-1 4-3 2" fill="none" stroke="#555" stroke-width="0.800"/><path d="M28 29.500c5 0 8 3 8 8" fill="none" stroke="#555" stroke-width="0.800"/><path d="M40 37.500c2-9 4-9 5-4s3 5 4 2" fill="none" stroke="#555" stroke-width="0.800"/><path d="M59.500 29.500c-2 0-1 4-2.500 4.500 1.500 0.500 0.500 4.500 2.500 4.500" fill="none" stroke="#555" stroke-width="0.800"/><path d="M70 29.500c2 0 1 4 2.500 4.500-1.500 0.500-0.500 4.500-2.500 4.500" fill="none" stroke="#555" stroke-width="0.800"/></svg>
<svg style="position:absolute;left:630.5px;top:42.0px;" width="19" height="19" viewBox="0 0 19 19"><rect x="4" y="4" width="11" height="11" fill="#eac27a"/><rect x="0.500" y="0.500" width="7" height="7" fill="#fff" stroke="#777" stroke-width="0.800"/><rect x="11.500" y="11.500" width="7" height="7" fill="#fff" stroke="#777" stroke-width="0.800"/></svg>
<div style="position:absolute;left:632.5px;top:64.5px;font-size:8.5px;line-height:8.5px;color:#444;white-space:nowrap;font-family:'Liberation Sans','Noto Sans CJK KR',sans-serif;letter-spacing:-0.32px;">정렬</div>
<svg style="position:absolute;left:638.5px;top:77.5px;" width="4" height="3" viewBox="0 0 4 3"><path d="M0 0.300h4l-2 2.200z" fill="#666"/></svg>
<svg style="position:absolute;left:660.0px;top:42.0px;" width="21" height="21" viewBox="0 0 21 21"><rect x="1" y="1" width="15" height="15" rx="4" fill="#fafafa" stroke="#c6c6c6" stroke-width="0.900"/><path d="M19.500 5l-8 9-3 1.500 1-3 8.500-8.500z" fill="#c9c9c9"/></svg>
<div style="position:absolute;left:661.0px;top:64.5px;font-size:8.5px;line-height:8.5px;color:#a9a9a9;white-space:nowrap;font-family:'Liberation Sans','Noto Sans CJK KR',sans-serif;letter-spacing:0.18px;">빠른</div>
<div style="position:absolute;left:654.5px;top:75.0px;font-size:8.5px;line-height:8.5px;color:#a9a9a9;white-space:nowrap;font-family:'Liberation Sans','Noto Sans CJK KR',sans-serif;letter-spacing:-0.32px;">스타일</div>
<svg style="position:absolute;left:679.5px;top:78.5px;" width="4" height="3" viewBox="0 0 4 3"><path d="M0 0.300h4l-2 2.200z" fill="#c4c4c4"/></svg>
<svg style="position:absolute;left:688.0px;top:41.0px;" width="11" height="11" viewBox="0 0 11 11"><path d="M5 1l4.500 4.500-4 4-4.500-4.500z" fill="none" stroke="#b5b5b5" stroke-width="0.900"/><path d="M3.500 0.500l2 2" stroke="#b5b5b5" stroke-width="0.800"/><path d="M10 7c0.800 1.200 0.800 2 0 2.500-0.800-0.500-0.800-1.300 0-2.500z" fill="#c9c9c9"/></svg>
<div style="position:absolute;left:700.0px;top:42.5px;font-size:8.5px;line-height:8.5px;color:#a9a9a9;white-space:nowrap;font-family:'Liberation Sans','Noto Sans CJK KR',sans-serif;letter-spacing:-0.33px;">도형 채우기</div>
<svg style="position:absolute;left:742.0px;top:45.5px;" width="4" height="3" viewBox="0 0 4 3"><path d="M0 0.300h4l-2 2.200z" fill="#c4c4c4"/></svg>
<svg style="position:absolute;left:688.0px;top:56.0px;" width="11" height="11" viewBox="0 0 11 11"><path d="M1 2h6.500M1 2v7h7v-3" fill="none" stroke="#b5b5b5" stroke-width="0.900"/><path d="M4 7.500l0.500-2 5-5 1.500 1.500-5 5z" fill="#cfcfcf"/></svg>
<div style="position:absolute;left:700.0px;top:57.5px;font-size:8.5px;line-height:8.5px;color:#a9a9a9;white-space:nowrap;font-family:'Liberation Sans','Noto Sans CJK KR',sans-serif;letter-spacing:-0.33px;">도형 윤곽선</div>
<svg style="position:absolute;left:742.0px;top:60.5px;" width="4" height="3" viewBox="0 0 4 3"><path d="M0 0.300h4l-2 2.200z" fill="#c4c4c4"/></svg>
<svg style="position:absolute;left:688.0px;top:71.0px;" width="12" height="11" viewBox="0 0 12 11"><ellipse cx="6.500" cy="6" rx="4.500" ry="3.800" fill="#d9d9d9"/><ellipse cx="5" cy="5" rx="4.500" ry="3.800" fill="#f6f6f6" stroke="#b5b5b5" stroke-width="0.900"/></svg>
<div style="position:absolute;left:700.0px;top:72.5px;font-size:8.5px;line-height:8.5px;color:#a9a9a9;white-space:nowrap;font-family:'Liberation Sans','Noto Sans CJK KR',sans-serif;letter-spacing:-0.33px;">도형 효과</div>
<svg style="position:absolute;left:735.0px;top:75.5px;" width="4" height="3" viewBox="0 0 4 3"><path d="M0 0.300h4l-2 2.200z" fill="#c4c4c4"/></svg>
<svg style="position:absolute;left:757.5px;top:41.5px;" width="10" height="10" viewBox="0 0 10 10"><circle cx="6" cy="3.800" r="2.800" fill="none" stroke="#41649a" stroke-width="1.100"/><path d="M4 6l-3.300 3.300" stroke="#41649a" stroke-width="1.400"/></svg>
<div style="position:absolute;left:770.0px;top:42.5px;font-size:8.5px;line-height:8.5px;color:#444;white-space:nowrap;font-family:'Liberation Sans','Noto Sans CJK KR',sans-serif;letter-spacing:-0.57px;">찾기</div>
<div style="position:absolute;left:756.0px;top:55.7px;font-size:7.0px;line-height:7.0px;color:#444;white-space:nowrap;font-family:'Liberation Sans','Noto Sans CJK KR',sans-serif;letter-spacing:0.05px;">가</div>
<svg style="position:absolute;left:760.0px;top:59.0px;" width="9" height="8" viewBox="0 0 9 8"><path d="M1 0.500c0 4 1 5.500 4 5.500M3.500 4.500l1.700 1.500-1.700 1.500" fill="none" stroke="#41649a" stroke-width="0.900"/><rect x="5.500" y="3" width="3" height="4.500" fill="#41649a"/></svg>
<div style="position:absolute;left:770.0px;top:57.5px;font-size:8.5px;line-height:8.5px;color:#444;white-space:nowrap;font-family:'Liberation Sans','Noto Sans CJK KR',sans-serif;letter-spacing:-0.49px;">바꾸기</div>
<svg style="position:absolute;left:798.5px;top:60.5px;" width="4" height="3" viewBox="0 0 4 3"><path d="M0 0.300h4l-2 2.200z" fill="#666"/></svg>
<svg style="position:absolute;left:759.0px;top:71.0px;" width="8" height="11" viewBox="0 0 8 11"><path d="M1 0.700v8l2.200-2 1.500 3.500 1.300-0.600-1.500-3.400h2.800z" fill="#fff" stroke="#555" stroke-width="0.800"/></svg>
<div style="position:absolute;left:770.0px;top:72.5px;font-size:8.5px;line-height:8.5px;color:#444;white-space:nowrap;font-family:'Liberation Sans','Noto Sans CJK KR',sans-serif;letter-spacing:-0.57px;">선택</div>
<svg style="position:absolute;left:788.0px;top:75.5px;" width="4" height="3" viewBox="0 0 4 3"><path d="M0 0.300h4l-2 2.200z" fill="#666"/></svg>

<div style="position:absolute;left:193.5px;top:98.0px;width:1.0px;height:554.0px;background:#d0d0d0;"></div>
<div style="position:absolute;left:182.0px;top:99.0px;width:9.0px;height:552.0px;background:#dcdcdc;"></div>
<div style="position:absolute;left:182.0px;top:99.5px;width:9.0px;height:9.5px;background:#fff;border:1px solid #cfcfcf;"></div>
<svg style="position:absolute;left:184.0px;top:102.5px;" width="5" height="3" viewBox="0 0 5 3"><path d="M0 3l2.500-2.800 2.500 2.800z" fill="#666"/></svg>
<div style="position:absolute;left:182.0px;top:109.0px;width:9.0px;height:153.5px;background:#fff;border:1px solid #cfcfcf;"></div>
<div style="position:absolute;left:182.0px;top:641.0px;width:9.0px;height:10.0px;background:#fff;border:1px solid #cfcfcf;"></div>
<svg style="position:absolute;left:184.0px;top:644.5px;" width="5" height="3" viewBox="0 0 5 3"><path d="M0 0h5l-2.500 2.800z" fill="#666"/></svg>
<div style="position:absolute;left:8.5px;top:108.5px;font-size:9.5px;line-height:9.5px;color:#444;white-space:nowrap;font-family:'Liberation Sans','Noto Sans CJK KR',sans-serif;">1</div>
<div style="position:absolute;left:8.5px;top:235.0px;font-size:9.5px;line-height:9.5px;color:#444;white-space:nowrap;font-family:'Liberation Sans','Noto Sans CJK KR',sans-serif;">2</div>
<div style="position:absolute;left:8.5px;top:361.5px;font-size:9.5px;line-height:9.5px;color:#444;white-space:nowrap;font-family:'Liberation Sans','Noto Sans CJK KR',sans-serif;">3</div>
<div style="position:absolute;left:8.5px;top:486.5px;font-size:9.5px;line-height:9.5px;color:#c8502f;white-space:nowrap;font-family:'Liberation Sans','Noto Sans CJK KR',sans-serif;">4</div>
<div style="position:absolute;left:8.5px;top:613.0px;font-size:9.5px;line-height:9.5px;color:#444;white-space:nowrap;font-family:'Liberation Sans','Noto Sans CJK KR',sans-serif;">5</div>
<div style="position:absolute;left:16.5px;top:109.0px;width:152.0px;height:114.5px;background:#dadada;"></div>
<div style="position:absolute;left:17.0px;top:109.5px;width:151.0px;height:113.5px;background:#fff;"></div>
<div style="position:absolute;left:47.5px;top:133.9px;font-size:7.5px;line-height:7.5px;color:#222;white-space:nowrap;font-family:'Liberation Sans','Noto Sans CJK KR',sans-serif;font-weight:bold;letter-spacing:0.45px;">한국과 아세안의 상호 인식</div>
<div style="position:absolute;left:56.5px;top:151.4px;font-size:5.5px;line-height:5.5px;color:#333;white-space:nowrap;font-family:'Liberation Sans','Noto Sans CJK KR',sans-serif;font-weight:bold;letter-spacing:0.67px;">부산외대 아세안지역설명회</div>
<div style="position:absolute;left:77.0px;top:179.9px;font-size:5.5px;line-height:5.5px;color:#444;white-space:nowrap;font-family:'Liberation Sans','Noto Sans CJK KR',sans-serif;letter-spacing:0.04px;">2022. 2. 10.</div>
<div style="position:absolute;left:59.5px;top:191.2px;font-size:5.8px;line-height:5.8px;color:#333;white-space:nowrap;font-family:'Liberation Sans','Noto Sans CJK KR',sans-serif;letter-spacing:0.76px;">윤진표 교수 (성신여대)</div>
<div style="position:absolute;left:16.5px;top:235.5px;width:152.0px;height:114.5px;background:#dadada;"></div>
<div style="position:absolute;left:17.0px;top:236.0px;width:151.0px;height:113.5px;background:#fff;"></div>
<div style="position:absolute;left:43.0px;top:253.5px;font-size:8.5px;line-height:8.5px;color:#222;white-space:nowrap;font-family:'Liberation Sans','Noto Sans CJK KR',sans-serif;font-weight:bold;letter-spacing:0.34px;">윤진표</div>
<div style="position:absolute;left:31.0px;top:266.3px;font-size:3.5px;line-height:3.5px;color:#666;white-space:nowrap;font-family:'Liberation Sans','Noto Sans CJK KR',sans-serif;">•</div>
<div style="position:absolute;left:36.0px;top:266.1px;font-size:4.0px;line-height:4.0px;color:#666;white-space:nowrap;font-family:'Liberation Sans','Noto Sans CJK KR',sans-serif;letter-spacing:0.33px;">부산외대 명예 교수</div>
<div style="position:absolute;left:36.0px;top:271.6px;font-size:4.0px;line-height:4.0px;color:#666;white-space:nowrap;font-family:'Liberation Sans','Noto Sans CJK KR',sans-serif;letter-spacing:-0.00px;">(비교정치 및 동남아지역연구)</div>
<div style="position:absolute;left:36.0px;top:276.6px;font-size:4.0px;line-height:4.0px;color:#666;white-space:nowrap;font-family:'Liberation Sans','Noto Sans CJK KR',sans-serif;letter-spacing:0.02px;">성신여대 사회과학대 학장</div>
<div style="position:absolute;left:31.0px;top:282.3px;font-size:3.5px;line-height:3.5px;color:#666;white-space:nowrap;font-family:'Liberation Sans','Noto Sans CJK KR',sans-serif;">•</div>
<div style="position:absolute;left:36.0px;top:282.1px;font-size:4.0px;line-height:4.0px;color:#666;white-space:nowrap;font-family:'Liberation Sans','Noto Sans CJK KR',sans-serif;letter-spacing:0.08px;">한국동남아학회 회장</div>
<div style="position:absolute;left:36.0px;top:287.3px;font-size:4.0px;line-height:4.0px;color:#666;white-space:nowrap;font-family:'Liberation Sans','Noto Sans CJK KR',sans-serif;letter-spacing:0.04px;">한국동남아연구소 소장 역임</div>
<div style="position:absolute;left:31.0px;top:292.6px;font-size:3.5px;line-height:3.5px;color:#666;white-space:nowrap;font-family:'Liberation Sans','Noto Sans CJK KR',sans-serif;">•</div>
<div style="position:absolute;left:36.0px;top:292.4px;font-size:4.0px;line-height:4.0px;color:#666;white-space:nowrap;font-family:'Liberation Sans','Noto Sans CJK KR',sans-serif;letter-spacing:0.00px;">신남방정책특위 민간자문위원</div>
<div style="position:absolute;left:31.0px;top:298.3px;font-size:3.5px;line-height:3.5px;color:#666;white-space:nowrap;font-family:'Liberation Sans','Noto Sans CJK KR',sans-serif;">•</div>
<div style="position:absolute;left:36.0px;top:298.1px;font-size:4.0px;line-height:4.0px;color:#666;white-space:nowrap;font-family:'Liberation Sans','Noto Sans CJK KR',sans-serif;letter-spacing:0.16px;">국제교류재단 글로벌한국학센터 위원</div>
<div style="position:absolute;left:31.0px;top:303.5px;font-size:3.5px;line-height:3.5px;color:#666;white-space:nowrap;font-family:'Liberation Sans','Noto Sans CJK KR',sans-serif;">•</div>
<div style="position:absolute;left:36.0px;top:303.3px;font-size:4.0px;line-height:4.0px;color:#666;white-space:nowrap;font-family:'Liberation Sans','Noto Sans CJK KR',sans-serif;letter-spacing:-0.07px;">미국 University of South Carolina</div>
<div style="position:absolute;left:36.0px;top:308.3px;font-size:4.0px;line-height:4.0px;color:#666;white-space:nowrap;font-family:'Liberation Sans','Noto Sans CJK KR',sans-serif;letter-spacing:0.12px;">정치학박사</div>
<div style="position:absolute;left:31.0px;top:313.8px;font-size:3.5px;line-height:3.5px;color:#666;white-space:nowrap;font-family:'Liberation Sans','Noto Sans CJK KR',sans-serif;">•</div>
<div style="position:absolute;left:36.0px;top:313.6px;font-size:4.0px;line-height:4.0px;color:#666;white-space:nowrap;font-family:'Liberation Sans','Noto Sans CJK KR',sans-serif;letter-spacing:0.04px;">연세대학교 정외과, 대학원 정치학과 졸업</div>
<div style="position:absolute;left:31.0px;top:320.0px;font-size:3.5px;line-height:3.5px;color:#666;white-space:nowrap;font-family:'Liberation Sans','Noto Sans CJK KR',sans-serif;">•</div>
<div style="position:absolute;left:36.0px;top:319.8px;font-size:4.0px;line-height:4.0px;color:#666;white-space:nowrap;font-family:'Liberation Sans','Noto Sans CJK KR',sans-serif;letter-spacing:-0.04px;">이메일:</div>
<div style="position:absolute;left:49.0px;top:319.8px;font-size:4.0px;line-height:4.0px;color:#3a3ad0;white-space:nowrap;font-family:'Liberation Sans','Noto Sans CJK KR',sans-serif;letter-spacing:-0.18px;text-decoration:underline;">sample@sungshin.ac.kr</div>
<div style="position:absolute;left:36.0px;top:324.6px;font-size:4.0px;line-height:4.0px;color:#666;white-space:nowrap;font-family:'Liberation Sans','Noto Sans CJK KR',sans-serif;letter-spacing:-0.10px;">전화: 010-7139-8404</div>
<svg style="position:absolute;left:91.0px;top:245.5px;" width="34" height="63" viewBox="0 0 34 63"><ellipse cx="19.500" cy="60" rx="11" ry="2" fill="#cfcfcf"/><path d="M12 44l-2.500 14 5 1 3-10 3 10 6 0-3-15z" fill="#5d5480"/><ellipse cx="11" cy="59" rx="4.500" ry="2" fill="#2d2b33"/><ellipse cx="24.500" cy="59.500" rx="4.500" ry="2" fill="#2d2b33"/><path d="M10 33c3-3 13-3 16 0l2 11c-5 3-15 3-19 0z" fill="#a9cfe8"/><path d="M17 41l13-7 2.500 3.500-13 8z" fill="#d9b98a"/><ellipse cx="14" cy="21.500" rx="12.500" ry="12" fill="#eebfa0"/><path d="M0.500 19c-3-12 6-18.500 15.500-18.500s18 6.500 14.500 21c-2-7-7-11-15-10s-11 3-15 7.500z" fill="#2e2623"/><circle cx="8.500" cy="21" r="3" fill="none" stroke="#6b4a3a" stroke-width="0.600"/><circle cx="17.500" cy="20.500" r="3" fill="none" stroke="#6b4a3a" stroke-width="0.600"/><path d="M9 29c2 1.500 5 1.500 7 0" stroke="#b06a58" stroke-width="0.700" fill="none"/></svg>
<div style="position:absolute;left:125.0px;top:289.2px;width:38.2px;height:55.7px;background:#4f74c4;"></div>
<div style="position:absolute;left:128.5px;top:294.7px;font-size:3.8px;line-height:3.8px;color:#fff;white-space:nowrap;font-family:'Liberation Sans','Noto Sans CJK KR',sans-serif;font-weight:bold;letter-spacing:0.25px;">현대</div>
<div style="position:absolute;left:128.5px;top:300.4px;font-size:5.5px;line-height:5.5px;color:#f1de63;white-space:nowrap;font-family:'Liberation Sans','Noto Sans CJK KR',sans-serif;font-weight:bold;letter-spacing:0.81px;">동남아의</div>
<div style="position:absolute;left:128.5px;top:308.2px;font-size:3.8px;line-height:3.8px;color:#fff;white-space:nowrap;font-family:'Liberation Sans','Noto Sans CJK KR',sans-serif;font-weight:bold;letter-spacing:0.25px;">이해</div>
<div style="position:absolute;left:125.0px;top:316.0px;width:38.2px;height:23.0px;background:#7f8f96;"></div>
<div style="position:absolute;left:125.0px;top:316.0px;width:12.0px;height:6.0px;background:#6b4a33;"></div>
<div style="position:absolute;left:137.0px;top:316.0px;width:26.2px;height:6.0px;background:#8fa3b5;"></div>
<div style="position:absolute;left:125.0px;top:322.5px;width:11.0px;height:16.5px;background:#b9a58c;"></div>
<div style="position:absolute;left:136.5px;top:322.5px;width:15.5px;height:16.5px;background:#7fb7c3;"></div>
<div style="position:absolute;left:152.5px;top:322.5px;width:10.7px;height:16.5px;background:#a8644f;"></div>
<div style="position:absolute;left:138.0px;top:335.0px;width:14.0px;height:4.0px;background:#33475a;"></div>
<div style="position:absolute;left:125.0px;top:339.0px;width:38.2px;height:5.9px;background:#4f74c4;"></div>
<div style="position:absolute;left:16.5px;top:362.2px;width:152.0px;height:114.5px;background:#dadada;"></div>
<div style="position:absolute;left:17.0px;top:362.7px;width:151.0px;height:113.5px;background:#fff;"></div>
<div style="position:absolute;left:52.0px;top:370.7px;font-size:7.0px;line-height:7.0px;color:#222;white-space:nowrap;font-family:'Liberation Sans','Noto Sans CJK KR',sans-serif;font-weight:bold;letter-spacing:0.13px;">한국과 아세안의 상호 인식</div>
<div style="position:absolute;left:24.0px;top:386.1px;font-size:4.0px;line-height:4.0px;color:#555;white-space:nowrap;font-family:'Liberation Sans','Noto Sans CJK KR',sans-serif;letter-spacing:0.69px;">신남방정책의 목표: ‘사람 중심의 평화와 번영 공동체 건설’</div>
<div style="position:absolute;left:25.0px;top:392.1px;font-size:4.0px;line-height:4.0px;color:#e0506a;white-space:nowrap;font-family:'Liberation Sans','Noto Sans CJK KR',sans-serif;letter-spacing:0.02px;">3P(People,</div>
<div style="position:absolute;left:47.5px;top:392.1px;font-size:4.0px;line-height:4.0px;color:#555;white-space:nowrap;font-family:'Liberation Sans','Noto Sans CJK KR',sans-serif;letter-spacing:0.35px;">Prosperity, Peace); 교류증진을 통한</div>
<div style="position:absolute;left:121.0px;top:392.1px;font-size:4.0px;line-height:4.0px;color:#e0506a;white-space:nowrap;font-family:'Liberation Sans','Noto Sans CJK KR',sans-serif;letter-spacing:0.82px;">상호이해</div>
<div style="position:absolute;left:141.0px;top:392.1px;font-size:4.0px;line-height:4.0px;color:#555;white-space:nowrap;font-family:'Liberation Sans','Noto Sans CJK KR',sans-serif;letter-spacing:0.31px;">증진</div>
<div style="position:absolute;left:23.0px;top:403.1px;font-size:4.0px;line-height:4.0px;color:#555;white-space:nowrap;font-family:'Liberation Sans','Noto Sans CJK KR',sans-serif;letter-spacing:0.75px;">[상호 인식 조사]</div>
<div style="position:absolute;left:24.0px;top:412.3px;font-size:3.5px;line-height:3.5px;color:#555;white-space:nowrap;font-family:'Liberation Sans','Noto Sans CJK KR',sans-serif;">•</div>
<div style="position:absolute;left:29.0px;top:411.7px;font-size:3.8px;line-height:3.8px;color:#555;white-space:nowrap;font-family:'Liberation Sans','Noto Sans CJK KR',sans-serif;letter-spacing:0.33px;">한국동남아연구소,</div>
<div style="position:absolute;left:62.0px;top:411.7px;font-size:3.8px;line-height:3.8px;color:#e0506a;white-space:nowrap;font-family:'Liberation Sans','Noto Sans CJK KR',sans-serif;letter-spacing:0.53px;">동남아의 한국에 대한 인식</div>
<div style="position:absolute;left:112.0px;top:411.7px;font-size:3.8px;line-height:3.8px;color:#555;white-space:nowrap;font-family:'Liberation Sans','Noto Sans CJK KR',sans-serif;letter-spacing:0.35px;">(2010년): 아세안 5개국 대</div>
<div style="position:absolute;left:29.0px;top:416.0px;font-size:3.8px;line-height:3.8px;color:#555;white-space:nowrap;font-family:'Liberation Sans','Noto Sans CJK KR',sans-serif;letter-spacing:0.31px;">학생(의식 설문조사): 중국, 한국인, 한국기업 호감도 및 주변국 비교</div>
<div style="position:absolute;left:24.0px;top:425.8px;font-size:3.5px;line-height:3.5px;color:#555;white-space:nowrap;font-family:'Liberation Sans','Noto Sans CJK KR',sans-serif;">•</div>
<div style="position:absolute;left:29.0px;top:425.2px;font-size:3.8px;line-height:3.8px;color:#555;white-space:nowrap;font-family:'Liberation Sans','Noto Sans CJK KR',sans-serif;letter-spacing:0.28px;">한아세안센터,</div>
<div style="position:absolute;left:54.0px;top:425.2px;font-size:3.8px;line-height:3.8px;color:#e0506a;white-space:nowrap;font-family:'Liberation Sans','Noto Sans CJK KR',sans-serif;letter-spacing:0.49px;">한국과 아세안 청년의 상호 인식</div>
<div style="position:absolute;left:113.5px;top:425.2px;font-size:3.8px;line-height:3.8px;color:#555;white-space:nowrap;font-family:'Liberation Sans','Noto Sans CJK KR',sans-serif;letter-spacing:0.22px;">(2017년): 20-34세 한국청</div>
<div style="position:absolute;left:29.0px;top:429.4px;font-size:3.8px;line-height:3.8px;color:#555;white-space:nowrap;font-family:'Liberation Sans','Noto Sans CJK KR',sans-serif;letter-spacing:0.09px;">년(1004명)/주한아세안학생(320명) 설문조사 및 집단 인터뷰: 한국과 아세안 간</div>
<div style="position:absolute;left:29.0px;top:433.6px;font-size:3.8px;line-height:3.8px;color:#555;white-space:nowrap;font-family:'Liberation Sans','Noto Sans CJK KR',sans-serif;letter-spacing:0.37px;">호감도 및 전망</div>
<div style="position:absolute;left:24.0px;top:443.3px;font-size:3.5px;line-height:3.5px;color:#555;white-space:nowrap;font-family:'Liberation Sans','Noto Sans CJK KR',sans-serif;">•</div>
<div style="position:absolute;left:29.0px;top:443.0px;font-size:3.8px;line-height:3.8px;color:#555;white-space:nowrap;font-family:'Liberation Sans','Noto Sans CJK KR',sans-serif;letter-spacing:0.28px;">한아세안센터,</div>
<div style="position:absolute;left:54.0px;top:443.0px;font-size:3.8px;line-height:3.8px;color:#e0506a;white-space:nowrap;font-family:'Liberation Sans','Noto Sans CJK KR',sans-serif;letter-spacing:0.49px;">한국과 아세안 청년의 상호 인식</div>
<div style="position:absolute;left:113.5px;top:443.0px;font-size:3.8px;line-height:3.8px;color:#555;white-space:nowrap;font-family:'Liberation Sans','Noto Sans CJK KR',sans-serif;letter-spacing:0.15px;">(2022년)</div>
<div style="position:absolute;left:15.0px;top:486.5px;width:155.5px;height:117.5px;background:#c8502f;"></div>
<div style="position:absolute;left:17.0px;top:489.0px;width:151.5px;height:113.0px;background:#fff;"></div>
<div style="position:absolute;left:0;top:0;width:1230px;height:666px;transform-origin:0 0;transform:translate(-64.50px,465.24px) scale(0.22206);pointer-events:none"><div style="position:absolute;left:367.0px;top:107.0px;width:681.0px;height:511.0px;background:#d2d2d2;"></div>
<div style="position:absolute;left:368.0px;top:108.0px;width:679.0px;height:509.0px;background:#fff;"></div>
<div style="position:absolute;left:454.5px;top:156.5px;font-size:31.5px;line-height:31.5px;color:#111;white-space:nowrap;font-family:'Liberation Sans','Noto Sans CJK KR',sans-serif;letter-spacing:0.84px;">2021년 한국과 아세안 청년 인식조사</div>
<div style="position:absolute;left:534.0px;top:192.7px;font-size:27.0px;line-height:27.0px;color:#111;white-space:nowrap;font-family:'Liberation Sans','Noto Sans CJK KR',sans-serif;letter-spacing:1.23px;">(한아세안센터/글로벌리서치)</div>
<div style="position:absolute;left:461.0px;top:250.0px;width:445.0px;height:24.0px;background:#e4eef8;"></div>
<div style="position:absolute;left:461.0px;top:249.0px;width:445.0px;height:2.0px;background:#6886ad;"></div>
<div style="position:absolute;left:461.0px;top:274.0px;width:445.0px;height:1.0px;background:#7a96bd;"></div>
<div style="position:absolute;left:461.0px;top:324.0px;width:445.0px;height:1.0px;background:#7a96bd;"></div>
<div style="position:absolute;left:461.0px;top:368.0px;width:445.0px;height:1.0px;background:#7a96bd;"></div>
<div style="position:absolute;left:461.0px;top:448.0px;width:445.0px;height:1.0px;background:#7a96bd;"></div>
<div style="position:absolute;left:461.0px;top:482.0px;width:445.0px;height:1.0px;background:#7a96bd;"></div>
<div style="position:absolute;left:461.0px;top:516.0px;width:445.0px;height:1.0px;background:#7a96bd;"></div>
<div style="position:absolute;left:461.0px;top:550.5px;width:445.0px;height:1.5px;background:#5b83b8;"></div>
<div style="position:absolute;left:524.0px;top:250.0px;width:1.0px;height:301.0px;background:#7a96bd;"></div>
<div style="position:absolute;left:619.0px;top:325.0px;width:1.0px;height:124.0px;background:#7a96bd;"></div>
<div style="position:absolute;left:619.0px;top:517.0px;width:1.0px;height:34.0px;background:#7a96bd;"></div>
<div style="position:absolute;left:715.0px;top:250.0px;width:1.0px;height:75.0px;background:#7a96bd;"></div>
<div style="position:absolute;left:715.0px;top:369.0px;width:1.0px;height:114.0px;background:#7a96bd;"></div>
<div style="position:absolute;left:715.0px;top:517.0px;width:1.0px;height:34.0px;background:#7a96bd;"></div>
<div style="position:absolute;left:810.0px;top:250.0px;width:1.0px;height:75.0px;background:#7a96bd;"></div>
<div style="position:absolute;left:810.0px;top:369.0px;width:1.0px;height:182.0px;background:#7a96bd;"></div>
<div style="position:absolute;left:482.5px;top:258.0px;font-size:9.5px;line-height:9.5px;color:#2a2a2a;white-space:nowrap;font-family:'Liberation Sans','NanumGothic','Noto Sans CJK KR',sans-serif;font-weight:bold;letter-spacing:0.17px;">구 분</div>
<div style="position:absolute;left:585.0px;top:258.0px;font-size:9.5px;line-height:9.5px;color:#2a2a2a;white-space:nowrap;font-family:'Liberation Sans','NanumGothic','Noto Sans CJK KR',sans-serif;font-weight:bold;letter-spacing:0.36px;">현지 아세안 청년</div>
<div style="position:absolute;left:743.5px;top:258.0px;font-size:9.5px;line-height:9.5px;color:#2a2a2a;white-space:nowrap;font-family:'Liberation Sans','NanumGothic','Noto Sans CJK KR',sans-serif;font-weight:bold;letter-spacing:0.33px;">한국 청년</div>
<div style="position:absolute;left:823.0px;top:258.0px;font-size:9.5px;line-height:9.5px;color:#2a2a2a;white-space:nowrap;font-family:'Liberation Sans','NanumGothic','Noto Sans CJK KR',sans-serif;font-weight:bold;letter-spacing:0.36px;">주한 아세안 청년</div>
<div style="position:absolute;left:474.5px;top:295.0px;font-size:9.5px;line-height:9.5px;color:#2a2a2a;white-space:nowrap;font-family:'Liberation Sans','NanumGothic','Noto Sans CJK KR',sans-serif;letter-spacing:0.32px;">조사대상</div>
<div style="position:absolute;left:597.0px;top:287.0px;font-size:9.5px;line-height:9.5px;color:#2a2a2a;white-space:nowrap;font-family:'Liberation Sans','NanumGothic','Noto Sans CJK KR',sans-serif;letter-spacing:0.35px;">만19~34세</div>
<div style="position:absolute;left:583.0px;top:302.0px;font-size:9.5px;line-height:9.5px;color:#2a2a2a;white-space:nowrap;font-family:'Liberation Sans','NanumGothic','Noto Sans CJK KR',sans-serif;letter-spacing:0.19px;">아세안 9개국 청년</div>
<div style="position:absolute;left:740.0px;top:287.0px;font-size:9.5px;line-height:9.5px;color:#2a2a2a;white-space:nowrap;font-family:'Liberation Sans','NanumGothic','Noto Sans CJK KR',sans-serif;letter-spacing:0.35px;">만19~34세</div>
<div style="position:absolute;left:744.0px;top:302.0px;font-size:9.5px;line-height:9.5px;color:#2a2a2a;white-space:nowrap;font-family:'Liberation Sans','NanumGothic','Noto Sans CJK KR',sans-serif;letter-spacing:0.12px;">한국 청년</div>
<div style="position:absolute;left:835.0px;top:279.5px;font-size:9.5px;line-height:9.5px;color:#2a2a2a;white-space:nowrap;font-family:'Liberation Sans','NanumGothic','Noto Sans CJK KR',sans-serif;letter-spacing:0.35px;">만19~34세</div>
<div style="position:absolute;left:823.0px;top:294.5px;font-size:9.5px;line-height:9.5px;color:#2a2a2a;white-space:nowrap;font-family:'Liberation Sans','NanumGothic','Noto Sans CJK KR',sans-serif;letter-spacing:0.36px;">한국 거주 아세안</div>
<div style="position:absolute;left:849.5px;top:309.0px;font-size:9.5px;line-height:9.5px;color:#2a2a2a;white-space:nowrap;font-family:'Liberation Sans','NanumGothic','Noto Sans CJK KR',sans-serif;letter-spacing:0.06px;">청년</div>
<div style="position:absolute;left:474.5px;top:341.5px;font-size:9.5px;line-height:9.5px;color:#2a2a2a;white-space:nowrap;font-family:'Liberation Sans','NanumGothic','Noto Sans CJK KR',sans-serif;letter-spacing:0.32px;">조사방법</div>
<div style="position:absolute;left:533.5px;top:334.5px;font-size:9.5px;line-height:9.5px;color:#2a2a2a;white-space:nowrap;font-family:'Liberation Sans','NanumGothic','Noto Sans CJK KR',sans-serif;letter-spacing:0.43px;">구조화된 설문지에</div>
<div style="position:absolute;left:541.0px;top:349.5px;font-size:9.5px;line-height:9.5px;color:#2a2a2a;white-space:nowrap;font-family:'Liberation Sans','NanumGothic','Noto Sans CJK KR',sans-serif;letter-spacing:-0.02px;">의한 CAPI 조사</div>
<div style="position:absolute;left:687.5px;top:341.5px;font-size:9.5px;line-height:9.5px;color:#2a2a2a;white-space:nowrap;font-family:'Liberation Sans','NanumGothic','Noto Sans CJK KR',sans-serif;letter-spacing:0.34px;">구조화된 설문지에 의한 온라인 조사</div>
<div style="position:absolute;left:474.5px;top:403.5px;font-size:9.5px;line-height:9.5px;color:#2a2a2a;white-space:nowrap;font-family:'Liberation Sans','NanumGothic','Noto Sans CJK KR',sans-serif;letter-spacing:0.32px;">대상국가</div>
<div style="position:absolute;left:545.0px;top:388.5px;font-size:9.5px;line-height:9.5px;color:#2a2a2a;white-space:nowrap;font-family:'Liberation Sans','NanumGothic','Noto Sans CJK KR',sans-serif;letter-spacing:0.35px;">아세안 3개국</div>
<div style="position:absolute;left:529.5px;top:403.5px;font-size:9.5px;line-height:9.5px;color:#2a2a2a;white-space:nowrap;font-family:'Liberation Sans','NanumGothic','Noto Sans CJK KR',sans-serif;letter-spacing:0.29px;">(브루나이, 캄보디아,</div>
<div style="position:absolute;left:556.5px;top:418.5px;font-size:9.5px;line-height:9.5px;color:#2a2a2a;white-space:nowrap;font-family:'Liberation Sans','NanumGothic','Noto Sans CJK KR',sans-serif;letter-spacing:0.51px;">라오스)</div>
<div style="position:absolute;left:641.0px;top:374.0px;font-size:9.5px;line-height:9.5px;color:#2a2a2a;white-space:nowrap;font-family:'Liberation Sans','NanumGothic','Noto Sans CJK KR',sans-serif;letter-spacing:0.20px;">아세안 6개국</div>
<div style="position:absolute;left:642.0px;top:389.0px;font-size:9.5px;line-height:9.5px;color:#2a2a2a;white-space:nowrap;font-family:'Liberation Sans','NanumGothic','Noto Sans CJK KR',sans-serif;letter-spacing:0.22px;">(인도네시아,</div>
<div style="position:absolute;left:627.0px;top:404.0px;font-size:9.5px;line-height:9.5px;color:#2a2a2a;white-space:nowrap;font-family:'Liberation Sans','NanumGothic','Noto Sans CJK KR',sans-serif;letter-spacing:0.24px;">말레이시아, 필리핀,</div>
<div style="position:absolute;left:636.0px;top:419.0px;font-size:9.5px;line-height:9.5px;color:#2a2a2a;white-space:nowrap;font-family:'Liberation Sans','NanumGothic','Noto Sans CJK KR',sans-serif;letter-spacing:0.28px;">싱가포르, 태국,</div>
<div style="position:absolute;left:652.0px;top:434.0px;font-size:9.5px;line-height:9.5px;color:#2a2a2a;white-space:nowrap;font-family:'Liberation Sans','NanumGothic','Noto Sans CJK KR',sans-serif;letter-spacing:0.51px;">베트남)</div>
<div style="position:absolute;left:754.5px;top:403.5px;font-size:9.5px;line-height:9.5px;color:#2a2a2a;white-space:nowrap;font-family:'Liberation Sans','NanumGothic','Noto Sans CJK KR',sans-serif;letter-spacing:0.06px;">한국</div>
<div style="position:absolute;left:829.0px;top:403.5px;font-size:9.5px;line-height:9.5px;color:#2a2a2a;white-space:nowrap;font-family:'Liberation Sans','NanumGothic','Noto Sans CJK KR',sans-serif;letter-spacing:0.14px;">아세안 10개국</div>
<div style="position:absolute;left:468.5px;top:460.5px;font-size:9.5px;line-height:9.5px;color:#2a2a2a;white-space:nowrap;font-family:'Liberation Sans','NanumGothic','Noto Sans CJK KR',sans-serif;letter-spacing:0.28px;">유효 표본수</div>
<div style="position:absolute;left:563.0px;top:460.5px;font-size:9.5px;line-height:9.5px;color:#2a2a2a;white-space:nowrap;font-family:'Liberation Sans','NanumGothic','Noto Sans CJK KR',sans-serif;letter-spacing:0.07px;">총 1,800명(국가별 200명씩)</div>
<div style="position:absolute;left:742.0px;top:460.5px;font-size:9.5px;line-height:9.5px;color:#2a2a2a;white-space:nowrap;font-family:'Liberation Sans','NanumGothic','Noto Sans CJK KR',sans-serif;letter-spacing:-0.16px;">총 1,000명</div>
<div style="position:absolute;left:841.0px;top:460.5px;font-size:9.5px;line-height:9.5px;color:#2a2a2a;white-space:nowrap;font-family:'Liberation Sans','NanumGothic','Noto Sans CJK KR',sans-serif;letter-spacing:-0.23px;">총 519명</div>
<div style="position:absolute;left:474.5px;top:494.5px;font-size:9.5px;line-height:9.5px;color:#2a2a2a;white-space:nowrap;font-family:'Liberation Sans','NanumGothic','Noto Sans CJK KR',sans-serif;letter-spacing:0.32px;">표본할당</div>
<div style="position:absolute;left:548.0px;top:494.5px;font-size:9.5px;line-height:9.5px;color:#2a2a2a;white-space:nowrap;font-family:'Liberation Sans','NanumGothic','Noto Sans CJK KR',sans-serif;letter-spacing:0.24px;">국가별, 성별, 연령별(5세 단위) 인구비중에 따른 비례 할당</div>
<div style="position:absolute;left:840.0px;top:494.5px;font-size:9.5px;line-height:9.5px;color:#2a2a2a;white-space:nowrap;font-family:'Liberation Sans','NanumGothic','Noto Sans CJK KR',sans-serif;letter-spacing:0.32px;text-decoration:underline wavy #d33;text-decoration-thickness:0.600px;text-underline-offset:1px;">유의할당</div>
<div style="position:absolute;left:474.5px;top:529.0px;font-size:9.5px;line-height:9.5px;color:#2a2a2a;white-space:nowrap;font-family:'Liberation Sans','NanumGothic','Noto Sans CJK KR',sans-serif;letter-spacing:0.32px;">조사기간</div>
<div style="position:absolute;left:540.0px;top:529.0px;font-size:9.5px;line-height:9.5px;color:#2a2a2a;white-space:nowrap;font-family:'Liberation Sans','NanumGothic','Noto Sans CJK KR',sans-serif;letter-spacing:-0.09px;">2021.8.3.~8.31.</div>
<div style="position:absolute;left:635.0px;top:529.0px;font-size:9.5px;line-height:9.5px;color:#2a2a2a;white-space:nowrap;font-family:'Liberation Sans','NanumGothic','Noto Sans CJK KR',sans-serif;letter-spacing:-0.02px;">2021.8.3.~8.20.</div>
<div style="position:absolute;left:731.0px;top:529.0px;font-size:9.5px;line-height:9.5px;color:#2a2a2a;white-space:nowrap;font-family:'Liberation Sans','NanumGothic','Noto Sans CJK KR',sans-serif;letter-spacing:-0.09px;">2021.8.4.~8.13.</div>
<div style="position:absolute;left:825.5px;top:529.0px;font-size:9.5px;line-height:9.5px;color:#2a2a2a;white-space:nowrap;font-family:'Liberation Sans','NanumGothic','Noto Sans CJK KR',sans-serif;letter-spacing:-0.02px;">2021.8.10.~9.3.</div>
</div>
<div style="position:absolute;left:16.5px;top:614.3px;width:152.0px;height:40.0px;background:#dadada;"></div>
<div style="position:absolute;left:17.0px;top:614.8px;width:151.0px;height:40.0px;background:#fff;"></div>
<div style="position:absolute;left:38.0px;top:614.8px;width:67.5px;height:40.0px;background:#efefef;"></div>
<div style="position:absolute;left:105.5px;top:614.8px;width:34.5px;height:40.0px;background:#d9d9d9;"></div>
<svg style="position:absolute;left:54.0px;top:614.8px;" width="31" height="5" viewBox="0 0 31 5"><path d="M0 0h31l-2.500 4.700h-26z" fill="#1d1d1d"/></svg>
<svg style="position:absolute;left:107.0px;top:614.8px;" width="31.5" height="5" viewBox="0 0 31.5 5"><path d="M0 0h31.500l-2.500 4.700h-26.500z" fill="#1d1d1d"/></svg>
<div style="position:absolute;left:58.0px;top:616.0px;font-size:2.2px;line-height:2.2px;color:#eee;white-space:nowrap;font-family:'Liberation Sans','Noto Sans CJK KR',sans-serif;letter-spacing:-0.12px;">현지 아세안 청년(N=1,800)</div>
<div style="position:absolute;left:111.5px;top:616.0px;font-size:2.2px;line-height:2.2px;color:#eee;white-space:nowrap;font-family:'Liberation Sans','Noto Sans CJK KR',sans-serif;letter-spacing:-0.05px;">주한 아세안 청년(N=519)</div>
<div style="position:absolute;left:39.5px;top:625.5px;width:13.0px;height:1.2px;background:#bdbdbd;"></div>
<div style="position:absolute;left:72.0px;top:625.5px;width:13.0px;height:1.2px;background:#bdbdbd;"></div>
<div style="position:absolute;left:108.5px;top:625.5px;width:13.0px;height:1.2px;background:#bdbdbd;"></div>
<div style="position:absolute;left:39.7px;top:630.4px;width:28.2px;height:24.0px;background:#fff;"></div>
<div style="position:absolute;left:72.0px;top:630.4px;width:28.8px;height:24.0px;background:#fff;"></div>
<div style="position:absolute;left:108.3px;top:630.4px;width:29.0px;height:24.0px;background:#fff;"></div>
<svg style="position:absolute;left:39.0px;top:631.0px;" width="100" height="24" viewBox="0 0 100 24"><defs><filter id="wcb" x="-20%" y="-20%" width="140%" height="140%"><feGaussianBlur stdDeviation="1.200"/></filter></defs><g filter="url(#wcb)"><ellipse cx="15" cy="13" rx="10" ry="8" fill="#f08fa8"/><ellipse cx="10" cy="17" rx="6" ry="4" fill="#8fd08a"/><ellipse cx="20" cy="18" rx="5" ry="3.500" fill="#7fa6e0"/><ellipse cx="15" cy="9" rx="5" ry="3" fill="#f4b36a"/><ellipse cx="47" cy="13" rx="10" ry="8" fill="#a9d67c"/><ellipse cx="44" cy="9" rx="5" ry="3" fill="#f3a7b8"/><ellipse cx="50" cy="17" rx="6" ry="3.500" fill="#f0cf70"/><ellipse cx="83" cy="13" rx="10" ry="8.500" fill="#c79bd6"/><ellipse cx="80" cy="9" rx="5" ry="3" fill="#f3a0b0"/><ellipse cx="86" cy="17" rx="6" ry="4" fill="#f0c88a"/></g></svg>
<div style="position:absolute;left:48.5px;top:636.9px;font-size:4.5px;line-height:4.5px;color:#d85a82;white-space:nowrap;font-family:'Liberation Sans','Noto Sans CJK KR',sans-serif;font-weight:bold;letter-spacing:0.61px;">한류</div>
<div style="position:absolute;left:77.0px;top:639.1px;font-size:4.0px;line-height:4.0px;color:#5e9a3e;white-space:nowrap;font-family:'Liberation Sans','Noto Sans CJK KR',sans-serif;font-weight:bold;letter-spacing:0.47px;">K-POP</div>
<div style="position:absolute;left:116.0px;top:636.9px;font-size:4.5px;line-height:4.5px;color:#8a59a8;white-space:nowrap;font-family:'Liberation Sans','Noto Sans CJK KR',sans-serif;font-weight:bold;letter-spacing:0.86px;">문화</div>
<svg style="position:absolute;left:173.0px;top:572.5px;z-index:5;" width="9" height="13" viewBox="0 0 9 13"><path d="M0.700 0.700v9.800l2.300-2.200 1.700 3.700 1.600-0.700-1.700-3.600h3.200z" fill="#fff" stroke="#222" stroke-width="0.800"/></svg>

<div style="position:absolute;left:367.0px;top:107.0px;width:681.0px;height:511.0px;background:#d2d2d2;"></div>
<div style="position:absolute;left:368.0px;top:108.0px;width:679.0px;height:509.0px;background:#fff;"></div>
<div style="position:absolute;left:454.5px;top:156.5px;font-size:31.5px;line-height:31.5px;color:#111;white-space:nowrap;font-family:'Liberation Sans','Noto Sans CJK KR',sans-serif;letter-spacing:0.84px;">2021년 한국과 아세안 청년 인식조사</div>
<div style="position:absolute;left:534.0px;top:192.7px;font-size:27.0px;line-height:27.0px;color:#111;white-space:nowrap;font-family:'Liberation Sans','Noto Sans CJK KR',sans-serif;letter-spacing:1.23px;">(한아세안센터/글로벌리서치)</div>
<div style="position:absolute;left:461.0px;top:250.0px;width:445.0px;height:24.0px;background:#e4eef8;"></div>
<div style="position:absolute;left:461.0px;top:249.0px;width:445.0px;height:2.0px;background:#6886ad;"></div>
<div style="position:absolute;left:461.0px;top:274.0px;width:445.0px;height:1.0px;background:#7a96bd;"></div>
<div style="position:absolute;left:461.0px;top:324.0px;width:445.0px;height:1.0px;background:#7a96bd;"></div>
<div style="position:absolute;left:461.0px;top:368.0px;width:445.0px;height:1.0px;background:#7a96bd;"></div>
<div style="position:absolute;left:461.0px;top:448.0px;width:445.0px;height:1.0px;background:#7a96bd;"></div>
<div style="position:absolute;left:461.0px;top:482.0px;width:445.0px;height:1.0px;background:#7a96bd;"></div>
<div style="position:absolute;left:461.0px;top:516.0px;width:445.0px;height:1.0px;background:#7a96bd;"></div>
<div style="position:absolute;left:461.0px;top:550.5px;width:445.0px;height:1.5px;background:#5b83b8;"></div>
<div style="position:absolute;left:524.0px;top:250.0px;width:1.0px;height:301.0px;background:#7a96bd;"></div>
<div style="position:absolute;left:619.0px;top:325.0px;width:1.0px;height:124.0px;background:#7a96bd;"></div>
<div style="position:absolute;left:619.0px;top:517.0px;width:1.0px;height:34.0px;background:#7a96bd;"></div>
<div style="position:absolute;left:715.0px;top:250.0px;width:1.0px;height:75.0px;background:#7a96bd;"></div>
<div style="position:absolute;left:715.0px;top:369.0px;width:1.0px;height:114.0px;background:#7a96bd;"></div>
<div style="position:absolute;left:715.0px;top:517.0px;width:1.0px;height:34.0px;background:#7a96bd;"></div>
<div style="position:absolute;left:810.0px;top:250.0px;width:1.0px;height:75.0px;background:#7a96bd;"></div>
<div style="position:absolute;left:810.0px;top:369.0px;width:1.0px;height:182.0px;background:#7a96bd;"></div>
<div style="position:absolute;left:482.5px;top:258.0px;font-size:9.5px;line-height:9.5px;color:#2a2a2a;white-space:nowrap;font-family:'Liberation Sans','NanumGothic','Noto Sans CJK KR',sans-serif;font-weight:bold;letter-spacing:0.17px;">구 분</div>
<div style="position:absolute;left:585.0px;top:258.0px;font-size:9.5px;line-height:9.5px;color:#2a2a2a;white-space:nowrap;font-family:'Liberation Sans','NanumGothic','Noto Sans CJK KR',sans-serif;font-weight:bold;letter-spacing:0.36px;">현지 아세안 청년</div>
<div style="position:absolute;left:743.5px;top:258.0px;font-size:9.5px;line-height:9.5px;color:#2a2a2a;white-space:nowrap;font-family:'Liberation Sans','NanumGothic','Noto Sans CJK KR',sans-serif;font-weight:bold;letter-spacing:0.33px;">한국 청년</div>
<div style="position:absolute;left:823.0px;top:258.0px;font-size:9.5px;line-height:9.5px;color:#2a2a2a;white-space:nowrap;font-family:'Liberation Sans','NanumGothic','Noto Sans CJK KR',sans-serif;font-weight:bold;letter-spacing:0.36px;">주한 아세안 청년</div>
<div style="position:absolute;left:474.5px;top:295.0px;font-size:9.5px;line-height:9.5px;color:#2a2a2a;white-space:nowrap;font-family:'Liberation Sans','NanumGothic','Noto Sans CJK KR',sans-serif;letter-spacing:0.32px;">조사대상</div>
<div style="position:absolute;left:597.0px;top:287.0px;font-size:9.5px;line-height:9.5px;color:#2a2a2a;white-space:nowrap;font-family:'Liberation Sans','NanumGothic','Noto Sans CJK KR',sans-serif;letter-spacing:0.35px;">만19~34세</div>
<div style="position:absolute;left:583.0px;top:302.0px;font-size:9.5px;line-height:9.5px;color:#2a2a2a;white-space:nowrap;font-family:'Liberation Sans','NanumGothic','Noto Sans CJK KR',sans-serif;letter-spacing:0.19px;">아세안 9개국 청년</div>
<div style="position:absolute;left:740.0px;top:287.0px;font-size:9.5px;line-height:9.5px;color:#2a2a2a;white-space:nowrap;font-family:'Liberation Sans','NanumGothic','Noto Sans CJK KR',sans-serif;letter-spacing:0.35px;">만19~34세</div>
<div style="position:absolute;left:744.0px;top:302.0px;font-size:9.5px;line-height:9.5px;color:#2a2a2a;white-space:nowrap;font-family:'Liberation Sans','NanumGothic','Noto Sans CJK KR',sans-serif;letter-spacing:0.12px;">한국 청년</div>
<div style="position:absolute;left:835.0px;top:279.5px;font-size:9.5px;line-height:9.5px;color:#2a2a2a;white-space:nowrap;font-family:'Liberation Sans','NanumGothic','Noto Sans CJK KR',sans-serif;letter-spacing:0.35px;">만19~34세</div>
<div style="position:absolute;left:823.0px;top:294.5px;font-size:9.5px;line-height:9.5px;color:#2a2a2a;white-space:nowrap;font-family:'Liberation Sans','NanumGothic','Noto Sans CJK KR',sans-serif;letter-spacing:0.36px;">한국 거주 아세안</div>
<div style="position:absolute;left:849.5px;top:309.0px;font-size:9.5px;line-height:9.5px;color:#2a2a2a;white-space:nowrap;font-family:'Liberation Sans','NanumGothic','Noto Sans CJK KR',sans-serif;letter-spacing:0.06px;">청년</div>
<div style="position:absolute;left:474.5px;top:341.5px;font-size:9.5px;line-height:9.5px;color:#2a2a2a;white-space:nowrap;font-family:'Liberation Sans','NanumGothic','Noto Sans CJK KR',sans-serif;letter-spacing:0.32px;">조사방법</div>
<div style="position:absolute;left:533.5px;top:334.5px;font-size:9.5px;line-height:9.5px;color:#2a2a2a;white-space:nowrap;font-family:'Liberation Sans','NanumGothic','Noto Sans CJK KR',sans-serif;letter-spacing:0.43px;">구조화된 설문지에</div>
<div style="position:absolute;left:541.0px;top:349.5px;font-size:9.5px;line-height:9.5px;color:#2a2a2a;white-space:nowrap;font-family:'Liberation Sans','NanumGothic','Noto Sans CJK KR',sans-serif;letter-spacing:-0.02px;">의한 CAPI 조사</div>
<div style="position:absolute;left:687.5px;top:341.5px;font-size:9.5px;line-height:9.5px;color:#2a2a2a;white-space:nowrap;font-family:'Liberation Sans','NanumGothic','Noto Sans CJK KR',sans-serif;letter-spacing:0.34px;">구조화된 설문지에 의한 온라인 조사</div>
<div style="position:absolute;left:474.5px;top:403.5px;font-size:9.5px;line-height:9.5px;color:#2a2a2a;white-space:nowrap;font-family:'Liberation Sans','NanumGothic','Noto Sans CJK KR',sans-serif;letter-spacing:0.32px;">대상국가</div>
<div style="position:absolute;left:545.0px;top:388.5px;font-size:9.5px;line-height:9.5px;color:#2a2a2a;white-space:nowrap;font-family:'Liberation Sans','NanumGothic','Noto Sans CJK KR',sans-serif;letter-spacing:0.35px;">아세안 3개국</div>
<div style="position:absolute;left:529.5px;top:403.5px;font-size:9.5px;line-height:9.5px;color:#2a2a2a;white-space:nowrap;font-family:'Liberation Sans','NanumGothic','Noto Sans CJK KR',sans-serif;letter-spacing:0.29px;">(브루나이, 캄보디아,</div>
<div style="position:absolute;left:556.5px;top:418.5px;font-size:9.5px;line-height:9.5px;color:#2a2a2a;white-space:nowrap;font-family:'Liberation Sans','NanumGothic','Noto Sans CJK KR',sans-serif;letter-spacing:0.51px;">라오스)</div>
<div style="position:absolute;left:641.0px;top:374.0px;font-size:9.5px;line-height:9.5px;color:#2a2a2a;white-space:nowrap;font-family:'Liberation Sans','NanumGothic','Noto Sans CJK KR',sans-serif;letter-spacing:0.20px;">아세안 6개국</div>
<div style="position:absolute;left:642.0px;top:389.0px;font-size:9.5px;line-height:9.5px;color:#2a2a2a;white-space:nowrap;font-family:'Liberation Sans','NanumGothic','Noto Sans CJK KR',sans-serif;letter-spacing:0.22px;">(인도네시아,</div>
<div style="position:absolute;left:627.0px;top:404.0px;font-size:9.5px;line-height:9.5px;color:#2a2a2a;white-space:nowrap;font-family:'Liberation Sans','NanumGothic','Noto Sans CJK KR',sans-serif;letter-spacing:0.24px;">말레이시아, 필리핀,</div>
<div style="position:absolute;left:636.0px;top:419.0px;font-size:9.5px;line-height:9.5px;color:#2a2a2a;white-space:nowrap;font-family:'Liberation Sans','NanumGothic','Noto Sans CJK KR',sans-serif;letter-spacing:0.28px;">싱가포르, 태국,</div>
<div style="position:absolute;left:652.0px;top:434.0px;font-size:9.5px;line-height:9.5px;color:#2a2a2a;white-space:nowrap;font-family:'Liberation Sans','NanumGothic','Noto Sans CJK KR',sans-serif;letter-spacing:0.51px;">베트남)</div>
<div style="position:absolute;left:754.5px;top:403.5px;font-size:9.5px;line-height:9.5px;color:#2a2a2a;white-space:nowrap;font-family:'Liberation Sans','NanumGothic','Noto Sans CJK KR',sans-serif;letter-spacing:0.06px;">한국</div>
<div style="position:absolute;left:829.0px;top:403.5px;font-size:9.5px;line-height:9.5px;color:#2a2a2a;white-space:nowrap;font-family:'Liberation Sans','NanumGothic','Noto Sans CJK KR',sans-serif;letter-spacing:0.14px;">아세안 10개국</div>
<div style="position:absolute;left:468.5px;top:460.5px;font-size:9.5px;line-height:9.5px;color:#2a2a2a;white-space:nowrap;font-family:'Liberation Sans','NanumGothic','Noto Sans CJK KR',sans-serif;letter-spacing:0.28px;">유효 표본수</div>
<div style="position:absolute;left:563.0px;top:460.5px;font-size:9.5px;line-height:9.5px;color:#2a2a2a;white-space:nowrap;font-family:'Liberation Sans','NanumGothic','Noto Sans CJK KR',sans-serif;letter-spacing:0.07px;">총 1,800명(국가별 200명씩)</div>
<div style="position:absolute;left:742.0px;top:460.5px;font-size:9.5px;line-height:9.5px;color:#2a2a2a;white-space:nowrap;font-family:'Liberation Sans','NanumGothic','Noto Sans CJK KR',sans-serif;letter-spacing:-0.16px;">총 1,000명</div>
<div style="position:absolute;left:841.0px;top:460.5px;font-size:9.5px;line-height:9.5px;color:#2a2a2a;white-space:nowrap;font-family:'Liberation Sans','NanumGothic','Noto Sans CJK KR',sans-serif;letter-spacing:-0.23px;">총 519명</div>
<div style="position:absolute;left:474.5px;top:494.5px;font-size:9.5px;line-height:9.5px;color:#2a2a2a;white-space:nowrap;font-family:'Liberation Sans','NanumGothic','Noto Sans CJK KR',sans-serif;letter-spacing:0.32px;">표본할당</div>
<div style="position:absolute;left:548.0px;top:494.5px;font-size:9.5px;line-height:9.5px;color:#2a2a2a;white-space:nowrap;font-family:'Liberation Sans','NanumGothic','Noto Sans CJK KR',sans-serif;letter-spacing:0.24px;">국가별, 성별, 연령별(5세 단위) 인구비중에 따른 비례 할당</div>
<div style="position:absolute;left:840.0px;top:494.5px;font-size:9.5px;line-height:9.5px;color:#2a2a2a;white-space:nowrap;font-family:'Liberation Sans','NanumGothic','Noto Sans CJK KR',sans-serif;letter-spacing:0.32px;text-decoration:underline wavy #d33;text-decoration-thickness:0.600px;text-underline-offset:1px;">유의할당</div>
<div style="position:absolute;left:474.5px;top:529.0px;font-size:9.5px;line-height:9.5px;color:#2a2a2a;white-space:nowrap;font-family:'Liberation Sans','NanumGothic','Noto Sans CJK KR',sans-serif;letter-spacing:0.32px;">조사기간</div>
<div style="position:absolute;left:540.0px;top:529.0px;font-size:9.5px;line-height:9.5px;color:#2a2a2a;white-space:nowrap;font-family:'Liberation Sans','NanumGothic','Noto Sans CJK KR',sans-serif;letter-spacing:-0.09px;">2021.8.3.~8.31.</div>
<div style="position:absolute;left:635.0px;top:529.0px;font-size:9.5px;line-height:9.5px;color:#2a2a2a;white-space:nowrap;font-family:'Liberation Sans','NanumGothic','Noto Sans CJK KR',sans-serif;letter-spacing:-0.02px;">2021.8.3.~8.20.</div>
<div style="position:absolute;left:731.0px;top:529.0px;font-size:9.5px;line-height:9.5px;color:#2a2a2a;white-space:nowrap;font-family:'Liberation Sans','NanumGothic','Noto Sans CJK KR',sans-serif;letter-spacing:-0.09px;">2021.8.4.~8.13.</div>
<div style="position:absolute;left:825.5px;top:529.0px;font-size:9.5px;line-height:9.5px;color:#2a2a2a;white-space:nowrap;font-family:'Liberation Sans','NanumGothic','Noto Sans CJK KR',sans-serif;letter-spacing:-0.02px;">2021.8.10.~9.3.</div>
<div style="position:absolute;left:194.0px;top:629.0px;width:1036.0px;height:1.0px;background:#cfcfcf;"></div>
<div style="position:absolute;left:202.0px;top:634.7px;font-size:9.0px;line-height:9.0px;color:#555;white-space:nowrap;font-family:'Liberation Sans','Noto Sans CJK KR',sans-serif;letter-spacing:1.03px;">여기에 슬라이드 노트의 내용을 입력하십시오</div>
<div style="position:absolute;left:1220.0px;top:98.0px;width:9.5px;height:507.0px;background:#dadada;"></div>
<div style="position:absolute;left:1220.0px;top:99.5px;width:9.5px;height:9.0px;background:#fff;border:1px solid #cfcfcf;"></div>
<svg style="position:absolute;left:1222.5px;top:102.5px;" width="5" height="3" viewBox="0 0 5 3"><path d="M0 3l2.500-2.800 2.500 2.800z" fill="#666"/></svg>
<div style="position:absolute;left:1220.0px;top:204.0px;width:9.5px;height:30.5px;background:#fff;border:1px solid #cfcfcf;"></div>
<div style="position:absolute;left:1220.0px;top:583.5px;width:9.5px;height:9.0px;background:#fff;border:1px solid #cfcfcf;"></div>
<svg style="position:absolute;left:1222.5px;top:587.0px;" width="5" height="3" viewBox="0 0 5 3"><path d="M0 0h5l-2.500 2.800z" fill="#666"/></svg>
<div style="position:absolute;left:1220.0px;top:593.0px;width:9.5px;height:24.0px;background:#e6e6e6;"></div>
<svg style="position:absolute;left:1222.0px;top:596.0px;" width="6" height="6" viewBox="0 0 6 6"><path d="M0.500 3h5M0.500 5.500l2.500-2.500 2.500 2.500zM0.500 2.500l2.500-2.500 2.500 2.500z" fill="#666" stroke="#666" stroke-width="0.300"/></svg>
<svg style="position:absolute;left:1222.0px;top:607.5px;" width="6" height="6" viewBox="0 0 6 6"><path d="M0.500 3h5M0.500 0.500l2.500 2.500 2.500-2.500zM0.500 3.500l2.500 2.500 2.500-2.500z" fill="#666" stroke="#666" stroke-width="0.300"/></svg>

<div style="position:absolute;left:0.0px;top:652.0px;width:1230.0px;height:14.0px;background:#f2f2f2;"></div>
<div style="position:absolute;left:0.0px;top:652.0px;width:1230.0px;height:0.8px;background:#d9d9d9;"></div>
<div style="position:absolute;left:4.5px;top:655.0px;font-size:8.5px;line-height:8.5px;color:#555;white-space:nowrap;font-family:'Liberation Sans','Noto Sans CJK KR',sans-serif;letter-spacing:-0.02px;">슬라이드 4/15</div>
<svg style="position:absolute;left:67.0px;top:654.0px;" width="10" height="10" viewBox="0 0 10 10"><path d="M0.500 1.500c1.500-1 3-1 4 0v7c-1-1-2.500-1-4 0zM4.500 1.500c1-0.800 2-1 3-0.800" fill="none" stroke="#666" stroke-width="0.800"/><path d="M9.300 2l-3 4.500-0.800 1.800 1.700-1.100 3-4.500z" fill="none" stroke="#666" stroke-width="0.700"/></svg>
<div style="position:absolute;left:87.5px;top:655.0px;font-size:8.5px;line-height:8.5px;color:#555;white-space:nowrap;font-family:'Liberation Sans','Noto Sans CJK KR',sans-serif;letter-spacing:-0.49px;">한국어</div>
<svg style="position:absolute;left:887.0px;top:654.5px;" width="7" height="8" viewBox="0 0 7 8"><path d="M3.500 0.500l2.500 2.500h-5zM0 4.500h7M0 6.200h7M0 7.700h5" stroke="#666" stroke-width="0.800" fill="#666"/></svg>
<div style="position:absolute;left:898.0px;top:655.0px;font-size:8.5px;line-height:8.5px;color:#555;white-space:nowrap;font-family:'Liberation Sans','Noto Sans CJK KR',sans-serif;letter-spacing:-0.26px;">슬라이드 노트</div>
<svg style="position:absolute;left:959.5px;top:655.0px;" width="8" height="8" viewBox="0 0 8 8"><path d="M0.300 0.500h7.200v4.800h-3.500l-1.800 2v-2h-1.900z" fill="#666"/></svg>
<div style="position:absolute;left:970.0px;top:655.0px;font-size:8.5px;line-height:8.5px;color:#555;white-space:nowrap;font-family:'Liberation Sans','Noto Sans CJK KR',sans-serif;letter-spacing:-0.57px;">메모</div>
<div style="position:absolute;left:997.0px;top:652.5px;width:24.5px;height:13.5px;background:#c9c9c9;"></div>
<svg style="position:absolute;left:1004.5px;top:654.5px;" width="9" height="9" viewBox="0 0 9 9"><rect x="0.500" y="0.500" width="8" height="8" fill="none" stroke="#555" stroke-width="0.800"/><path d="M2.500 0.500v8" stroke="#555" stroke-width="0.700"/><rect x="4" y="2" width="3" height="2.300" fill="none" stroke="#555" stroke-width="0.600"/></svg>
<svg style="position:absolute;left:1029.0px;top:654.5px;" width="10" height="9" viewBox="0 0 10 9"><rect x="0.500" y="0.500" width="3.500" height="3" rx="0.800" fill="none" stroke="#666" stroke-width="0.700"/><rect x="6" y="0.500" width="3.500" height="3" rx="0.800" fill="none" stroke="#666" stroke-width="0.700"/><rect x="0.500" y="5.500" width="3.500" height="3" rx="0.800" fill="none" stroke="#666" stroke-width="0.700"/><rect x="6" y="5.500" width="3.500" height="3" rx="0.800" fill="none" stroke="#666" stroke-width="0.700"/></svg>
<svg style="position:absolute;left:1053.5px;top:654.5px;" width="9" height="9" viewBox="0 0 9 9"><rect x="0.500" y="0.500" width="8" height="6.500" fill="#bdbdbd" stroke="#777" stroke-width="0.700"/><path d="M3 0.500v6.500M6 0.500v6.500M0.500 3.700h8" stroke="#888" stroke-width="0.600"/><path d="M4.500 7v1.500" stroke="#777" stroke-width="0.800"/></svg>
<svg style="position:absolute;left:1077.5px;top:654.5px;" width="10" height="10" viewBox="0 0 10 10"><path d="M0.500 0.800h9M1.500 0.800v4.200h7v-4.200M5 5v3M3 9h4" fill="none" stroke="#666" stroke-width="0.800"/><path d="M3.500 2h3l-1.500 2z" fill="#888"/></svg>
<div style="position:absolute;left:1098.0px;top:658.5px;width:4.0px;height:1.2px;background:#555;"></div>
<div style="position:absolute;left:1104.5px;top:658.7px;width:63.5px;height:0.8px;background:#9a9a9a;"></div>
<div style="position:absolute;left:1137.0px;top:655.0px;width:2.5px;height:8.5px;background:#555;"></div>
<div style="position:absolute;left:1171.5px;top:658.5px;width:4.5px;height:1.2px;background:#555;"></div>
<div style="position:absolute;left:1173.2px;top:656.8px;width:1.2px;height:4.5px;background:#555;"></div>
<div style="position:absolute;left:1186.5px;top:655.0px;font-size:8.5px;line-height:8.5px;color:#555;white-space:nowrap;font-family:'Liberation Sans','Noto Sans CJK KR',sans-serif;letter-spacing:-0.27px;">111 %</div>
<svg style="position:absolute;left:1216.5px;top:654.5px;" width="10" height="10" viewBox="0 0 10 10"><rect x="0.500" y="0.500" width="9" height="9" fill="none" stroke="#666" stroke-width="0.800"/><path d="M5 0.500v9M0.500 5h9" stroke="#666" stroke-width="0.600"/><path d="M2 2l2 2M8 2l-2 2M2 8l2-2M8 8l-2-2" stroke="#666" stroke-width="0.600"/></svg>

</div>

<!-- splitter handle -->
<div class="abs" style="left:1240px;top:494px;width:1.500px;height:26px;background:#bdbdbd"></div>
<div class="abs" style="left:1243px;top:494px;width:1.500px;height:26px;background:#bdbdbd"></div>

<svg style="position:absolute;left:1248px;top:320px" width="665" height="375" viewBox="0 0 665 375"><defs><linearGradient id="wl" x1="0" y1="0" x2="1" y2="0.300"><stop offset="0" stop-color="#a8aa98"/><stop offset="0.300" stop-color="#c4beaa"/><stop offset="1" stop-color="#d6cab5"/></linearGradient><radialGradient id="fc" cx="0.550" cy="0.350" r="0.750"><stop offset="0" stop-color="#f9e8e0"/><stop offset="0.450" stop-color="#eecbba"/><stop offset="0.850" stop-color="#d6a08a"/><stop offset="1" stop-color="#b5806d"/></radialGradient><linearGradient id="hr" x1="0" y1="0" x2="1" y2="1"><stop offset="0" stop-color="#3a3f45"/><stop offset="0.450" stop-color="#1c1f23"/><stop offset="1" stop-color="#15171a"/></linearGradient><pattern id="st" width="8.200" height="20" patternUnits="userSpaceOnUse" patternTransform="rotate(-4)"><rect width="8.200" height="20" fill="#e6eaed"/><rect x="0" width="2.300" height="20" fill="#57626c"/></pattern><pattern id="st2" width="7.600" height="20" patternUnits="userSpaceOnUse" patternTransform="rotate(-24)"><rect width="7.600" height="20" fill="#e3e7ea"/><rect x="0" width="2.300" height="20" fill="#5d6771"/></pattern><pattern id="st3" width="8" height="20" patternUnits="userSpaceOnUse" patternTransform="rotate(14)"><rect width="8" height="20" fill="#eef0f2"/><rect x="0" width="2" height="20" fill="#707a83"/></pattern><filter id="sf" x="-2%" y="-2%" width="104%" height="104%"><feGaussianBlur stdDeviation="0.800"/></filter><filter id="sf2" x="-10%" y="-10%" width="120%" height="120%"><feGaussianBlur stdDeviation="2.500"/></filter><clipPath id="wc"><rect x="0" y="0" width="665" height="375"/></clipPath></defs><g clip-path="url(#wc)"><g filter="url(#sf)"><rect x="-5" y="-5" width="675" height="385" fill="#f1f0ec"/><path d="M-5 -5H82L94 188L96 380H-5z" fill="url(#wl)"/><path d="M72 200L93 190L96 380H76z" fill="#a89a86" opacity="0.550" filter="url(#sf2)"/><rect x="90" y="0" width="148" height="47" fill="#d9d5cb"/><rect x="91.0" y="0.5" width="4.3" height="46.0" fill="#b9b2a4"/><rect x="95.0" y="1.6" width="3.5" height="44.9" fill="#e4e0d6"/><rect x="98.2" y="2.7" width="5.0" height="43.8" fill="#5b7a94"/><rect x="102.9" y="1.3" width="3.4" height="45.2" fill="#d8d4ca"/><rect x="106.0" y="1.7" width="4.0" height="44.8" fill="#b9b2a4"/><rect x="109.8" y="0.4" width="5.8" height="46.1" fill="#a0564f"/><rect x="115.3" y="1.7" width="5.2" height="44.8" fill="#b9b2a4"/><rect x="120.1" y="1.2" width="5.0" height="45.3" fill="#a0564f"/><rect x="124.9" y="2.6" width="3.4" height="43.9" fill="#2c2e33"/><rect x="128.0" y="1.6" width="4.6" height="44.9" fill="#2c2e33"/><rect x="132.3" y="2.0" width="5.0" height="44.5" fill="#3d4046"/><rect x="137.0" y="1.9" width="5.0" height="44.6" fill="#e4e0d6"/><rect x="141.7" y="2.1" width="3.6" height="44.4" fill="#b9b2a4"/><rect x="145.0" y="1.5" width="5.2" height="45.0" fill="#5a2a30"/><rect x="149.8" y="1.4" width="5.6" height="45.1" fill="#44474d"/><rect x="155.2" y="0.7" width="4.4" height="45.8" fill="#a9a395"/><rect x="159.3" y="0.7" width="5.4" height="45.8" fill="#2c2e33"/><rect x="164.4" y="2.6" width="4.9" height="43.9" fill="#44474d"/><rect x="168.9" y="2.9" width="4.2" height="43.6" fill="#3d4046"/><rect x="172.8" y="0.5" width="4.8" height="46.0" fill="#6d6a66"/><rect x="177.3" y="1.5" width="3.8" height="45.0" fill="#b9b2a4"/><rect x="180.8" y="0.2" width="6.2" height="46.3" fill="#6d6a66"/><rect x="186.7" y="1.1" width="4.3" height="45.4" fill="#8a3d45"/><rect x="190.7" y="1.4" width="5.0" height="45.1" fill="#d8d4ca"/><rect x="195.4" y="1.4" width="6.1" height="45.1" fill="#d8d4ca"/><rect x="201.3" y="2.1" width="3.5" height="44.4" fill="#44474d"/><rect x="204.5" y="1.2" width="4.2" height="45.3" fill="#e4e0d6"/><rect x="208.3" y="1.4" width="3.4" height="45.1" fill="#a9a395"/><rect x="211.4" y="1.5" width="5.1" height="45.0" fill="#5b7a94"/><rect x="216.2" y="0.4" width="5.6" height="46.1" fill="#a0564f"/><rect x="221.5" y="2.8" width="4.5" height="43.7" fill="#8a3d45"/><rect x="225.7" y="1.3" width="3.5" height="45.2" fill="#c9c4b8"/><rect x="228.9" y="2.5" width="6.0" height="44.0" fill="#c9c4b8"/><rect x="234.6" y="3.0" width="3.7" height="43.5" fill="#9a8f7d"/><path d="M91 55H238V149H97z" fill="#e4e0d6"/><rect x="97.0" y="91.5" width="6.2" height="57.5" fill="#b58d78"/><rect x="102.9" y="93.0" width="4.2" height="56.0" fill="#8c5b46"/><rect x="106.8" y="92.8" width="5.0" height="56.2" fill="#d7b9a8"/><rect x="111.5" y="91.4" width="4.5" height="57.6" fill="#c49a8e"/><rect x="115.7" y="92.7" width="4.7" height="56.3" fill="#b58d78"/><rect x="120.1" y="92.5" width="5.5" height="56.5" fill="#c49a8e"/><rect x="125.3" y="93.2" width="3.0" height="55.8" fill="#6e4a3c"/><rect x="128.0" y="91.8" width="7.0" height="8.2" fill="#b9c4c6"/><rect x="134.7" y="91.4" width="5.5" height="8.6" fill="#cfd4d4"/><rect x="139.9" y="91.4" width="5.7" height="8.6" fill="#7f9aa0"/><rect x="145.3" y="91.2" width="4.5" height="8.8" fill="#7f9aa0"/><rect x="149.5" y="91.6" width="4.6" height="8.4" fill="#cfd4d4"/><rect x="153.9" y="91.2" width="4.3" height="8.8" fill="#cfd4d4"/><rect x="157.9" y="91.6" width="7.1" height="8.4" fill="#cfd4d4"/><rect x="164.7" y="91.6" width="6.9" height="8.4" fill="#7f9aa0"/><rect x="171.3" y="92.0" width="6.2" height="8.0" fill="#b9c4c6"/><rect x="177.2" y="91.1" width="5.4" height="8.9" fill="#5b6a70"/><rect x="182.3" y="91.5" width="7.3" height="8.5" fill="#5b6a70"/><rect x="189.3" y="91.1" width="5.2" height="8.9" fill="#e8e6df"/><rect x="194.2" y="91.5" width="6.1" height="8.5" fill="#7f9aa0"/><rect x="128" y="100" width="65.500" height="49" fill="#f4f3f1"/><circle cx="160" cy="122" r="10.500" fill="#d6455a"/><path d="M149.500 122a10.500 10.500 0 0 0 21 0a5.250 5.250 0 0 0-10.500 0a5.250 5.250 0 0 1-10.500 0z" fill="#4a66b8"/><g transform="translate(143 111) rotate(-35)" stroke="#555" stroke-width="1.200"><path d="M-4.500 -2.500h9M-4.500 0h9M-4.500 2.500h9"/></g><g transform="translate(177 111) rotate(35)" stroke="#555" stroke-width="1.200"><path d="M-4.500 -2.500h9M-4.500 0h9M-4.500 2.500h9"/></g><g transform="translate(143 134) rotate(35)" stroke="#555" stroke-width="1.200"><path d="M-4.500 -2.500h9M-4.500 0h9M-4.500 2.500h9"/></g><g transform="translate(177 134) rotate(-35)" stroke="#555" stroke-width="1.200"><path d="M-4.500 -2.500h9M-4.500 0h9M-4.500 2.500h9"/></g><rect x="193.5" y="100.2" width="3.6" height="48.8" fill="#b5ad9f"/><rect x="196.8" y="100.7" width="3.3" height="48.3" fill="#8a8377"/><rect x="199.8" y="100.3" width="1.5" height="48.7" fill="#b5ad9f"/><rect x="201" y="91" width="28" height="57" fill="#8e2f3a"/><rect x="207" y="97" width="17" height="38" fill="#c77a6f"/><rect x="210" y="120" width="9" height="12" fill="#5b86b5"/><path d="M121 90L222 73L226 79L124 94z" fill="#4a3a2c"/><path d="M199 62L207 60L206 88L199 89z" fill="#4a3a2c"/><path d="M98 157H238V243H101z" fill="#e2dfd6"/><rect x="102" y="175" width="101" height="14" rx="2" fill="#1d1f25"/><rect x="132" y="174" width="50" height="6" fill="#3d4660"/><rect x="104.0" y="191.4" width="6.9" height="51.6" fill="#7d98b5"/><rect x="110.6" y="191.8" width="5.9" height="51.2" fill="#e5e7ea"/><rect x="116.1" y="191.1" width="6.6" height="51.9" fill="#e5e7ea"/><rect x="122.5" y="191.2" width="1.8" height="51.8" fill="#c9d3dc"/><rect x="124.0" y="192.5" width="5.8" height="50.5" fill="#f0eee9"/><rect x="129.5" y="190.6" width="5.8" height="52.4" fill="#d8d5cd"/><rect x="135.0" y="190.1" width="4.7" height="52.9" fill="#e8e6e0"/><rect x="139.4" y="191.4" width="5.8" height="51.6" fill="#a33a62"/><rect x="144.9" y="192.9" width="5.5" height="50.1" fill="#d8d5cd"/><rect x="150.1" y="192.2" width="5.8" height="50.8" fill="#8f2d55"/><rect x="155.6" y="191.1" width="2.7" height="51.9" fill="#a33a62"/><rect x="158.0" y="188.9" width="4.6" height="54.1" fill="#f0f1f0"/><rect x="162.3" y="189.2" width="4.9" height="53.8" fill="#3f6a8a"/><rect x="166.9" y="189.0" width="6.8" height="54.0" fill="#e9ecee"/><rect x="173.4" y="189.3" width="5.3" height="53.7" fill="#e9ecee"/><rect x="178.5" y="188.8" width="4.7" height="54.2" fill="#e9ecee"/><rect x="182.8" y="189.0" width="6.6" height="54.0" fill="#b9ccd8"/><rect x="189.1" y="189.3" width="5.6" height="53.7" fill="#dfe6ea"/><rect x="194.4" y="189.9" width="5.9" height="53.1" fill="#8fb0c4"/><rect x="200.0" y="189.5" width="4.2" height="22.5" fill="#5f9a6b"/><rect x="203.9" y="188.3" width="4.7" height="23.7" fill="#86b88a"/><rect x="208.4" y="189.2" width="3.4" height="22.8" fill="#3f6f8f"/><rect x="211.4" y="188.3" width="4.9" height="23.7" fill="#4d7f5a"/><rect x="216.0" y="188.9" width="4.5" height="23.1" fill="#e9ece6"/><rect x="220.2" y="189.1" width="3.6" height="22.9" fill="#5f9a6b"/><rect x="223.5" y="189.9" width="3.3" height="22.1" fill="#d8e0d4"/><rect x="226.6" y="189.5" width="3.5" height="22.5" fill="#86b88a"/><rect x="229.8" y="189.7" width="4.2" height="22.3" fill="#4d7f5a"/><rect x="233.6" y="188.1" width="5.0" height="23.9" fill="#86b88a"/><rect x="238.4" y="188.5" width="3.9" height="23.5" fill="#7aa37a"/><rect x="242.0" y="189.1" width="4.0" height="22.9" fill="#4d7f5a"/><rect x="200" y="212" width="39" height="31" fill="#f3f3f1"/><path d="M166 245L167 222L171 209L177 212L182 208L186 214L192 228L194 245z" fill="#2a2d31"/><path d="M127 228L150 232L152 243L140 246L132 240z" fill="#6f665a"/><path d="M102 256H246V340H104z" fill="#e4e1da"/><rect x="118" y="258" width="58" height="6" fill="#e9e7e1"/><rect x="119" y="264" width="55" height="7" fill="#d4d0c6"/><rect x="121" y="271" width="52" height="6" fill="#2a3150"/><rect x="119" y="277" width="56" height="4" fill="#c9c6be"/><rect x="111.0" y="284.6" width="4.8" height="53.4" fill="#d8d6cf"/><rect x="115.5" y="283.6" width="7.9" height="54.4" fill="#1a1b1e"/><rect x="123.1" y="284.5" width="7.6" height="53.5" fill="#e6e4de"/><rect x="130.4" y="283.1" width="6.4" height="54.9" fill="#2a2c2f"/><rect x="136.6" y="284.1" width="7.8" height="53.9" fill="#2a2c2f"/><rect x="144.0" y="281.6" width="7.4" height="56.4" fill="#e6e4de"/><rect x="151.1" y="283.9" width="6.2" height="54.1" fill="#2a2c2f"/><rect x="157.0" y="283.1" width="5.6" height="54.9" fill="#42505a"/><rect x="162.3" y="281.4" width="7.4" height="56.6" fill="#2a2c2f"/><rect x="169.5" y="282.1" width="5.3" height="55.9" fill="#3b4a44"/><rect x="174.5" y="283.2" width="3.8" height="54.8" fill="#3b4a44"/><rect x="104" y="351" width="60" height="30" fill="#dedbd3"/><rect x="112" y="356" width="14" height="24" fill="#33363b"/><rect x="89" y="46.5" width="160" height="8.5" fill="#f3f2ee"/><rect x="92" y="55" width="155" height="2.500" fill="#d6d2c8"/><rect x="89" y="148.7" width="160" height="8.3" fill="#f3f2ee"/><rect x="92" y="157" width="155" height="2.500" fill="#d6d2c8"/><rect x="89" y="243.5" width="160" height="12.5" fill="#f3f2ee"/><rect x="92" y="256" width="155" height="2.500" fill="#d6d2c8"/><rect x="89" y="340" width="160" height="11" fill="#f3f2ee"/><rect x="92" y="351" width="155" height="2.500" fill="#d6d2c8"/><path d="M80 -5H90L101 188L104 380H93L91 188z" fill="#f5f4f0"/><rect x="238" y="-5" width="20" height="250" fill="#f6f5f2"/><rect x="246.500" y="-5" width="1.200" height="250" fill="#dcdad4"/><path d="M-5 216H76L79 330L-5 330z" fill="#dfe1e2"/><path d="M-5 222L70 219L70 238L40 241L40 262L-5 268z" fill="#62bcc4"/><path d="M48 244L76 240L77 264L49 270z" fill="#3fae9c"/><path d="M-5 246L38 240L39 268L-5 276z" fill="#46b5a6"/><path d="M-5 282L39 272L40 298L-5 308z" fill="#2f9f88"/><path d="M50 274L77 268L78 290L51 298z" fill="#36a58e"/><path d="M-5 314L40 302L42 318L-5 330z" fill="#c9cccd"/><path d="M39 228L47 227L50 330L42 330z" fill="#e9eaeb"/><path d="M-5 330L80 290L84 380H-5z" fill="#d5d4d2"/><path d="M50 300L80 296L84 380L56 380z" fill="#2b2c31"/><path d="M52 300L66 297L68 312L53 315z" fill="#d9c9d2"/><path d="M-5 345L45 318L50 380H-5z" fill="#bfc0c0"/><path d="M30 340L44 332L48 380H34z" fill="#2a2b2e"/><path d="M-5 352L28 340L30 360L-5 372z" fill="#e8e8e8"/><rect x="258" y="0" width="178" height="22" fill="#d6d3cb"/><rect x="260.0" y="1.2" width="4.6" height="20.8" fill="#2d2f34"/><rect x="264.3" y="0.4" width="5.1" height="21.6" fill="#6e7276"/><rect x="269.1" y="1.1" width="4.7" height="20.9" fill="#efede8"/><rect x="273.5" y="0.5" width="4.8" height="21.5" fill="#2d2f34"/><rect x="278.0" y="1.9" width="5.9" height="20.1" fill="#6e7276"/><rect x="283.7" y="1.8" width="6.1" height="20.2" fill="#d9d6ce"/><rect x="289.4" y="0.3" width="5.8" height="21.7" fill="#3b3d42"/><rect x="294.9" y="0.6" width="4.5" height="21.4" fill="#d9d6ce"/><rect x="300.0" y="0.4" width="4.6" height="21.6" fill="#9a5a55"/><rect x="304.3" y="1.8" width="5.7" height="20.2" fill="#b8b2a4"/><rect x="309.6" y="1.3" width="6.1" height="20.7" fill="#5c6f86"/><rect x="315.5" y="1.8" width="3.7" height="20.2" fill="#3b3f47"/><rect x="318.9" y="1.9" width="4.0" height="20.1" fill="#c9c5ba"/><rect x="322.5" y="0.3" width="6.0" height="21.7" fill="#33363c"/><rect x="328.2" y="0.3" width="5.8" height="21.7" fill="#c9c5ba"/><rect x="333.7" y="0.8" width="6.3" height="21.2" fill="#c9c5ba"/><rect x="339.7" y="0.6" width="3.9" height="21.4" fill="#7a4a48"/><rect x="343.3" y="0.7" width="4.4" height="21.3" fill="#3b3f47"/><rect x="347.4" y="0.0" width="4.6" height="22.0" fill="#5c6f86"/><rect x="351.7" y="0.6" width="4.9" height="21.4" fill="#7f8a96"/><rect x="356.2" y="1.8" width="3.6" height="20.2" fill="#2e3138"/><rect x="359.6" y="0.2" width="6.2" height="21.8" fill="#9a5a55"/><rect x="365.5" y="1.8" width="4.1" height="20.2" fill="#b8b2a4"/><rect x="369.3" y="0.3" width="4.1" height="21.7" fill="#c9c5ba"/><rect x="373.1" y="1.4" width="5.8" height="20.6" fill="#9a5a55"/><rect x="378.7" y="1.1" width="4.5" height="20.9" fill="#b4a58c"/><rect x="382.9" y="1.4" width="5.0" height="20.6" fill="#7f8a96"/><rect x="387.6" y="1.6" width="4.1" height="20.4" fill="#b8b2a4"/><rect x="391.4" y="0.1" width="4.6" height="21.9" fill="#4b4f57"/><rect x="395.7" y="1.6" width="5.2" height="20.4" fill="#7f8a96"/><rect x="400.6" y="0.4" width="5.1" height="21.6" fill="#9a5a55"/><rect x="405.4" y="0.9" width="5.9" height="21.1" fill="#5c6f86"/><rect x="411.0" y="0.8" width="6.3" height="21.2" fill="#9a5a55"/><rect x="417.0" y="0.1" width="5.2" height="21.9" fill="#7a4a48"/><rect x="421.9" y="0.2" width="4.0" height="21.8" fill="#b8b2a4"/><rect x="425.6" y="0.4" width="4.1" height="21.6" fill="#9a5a55"/><rect x="429.4" y="1.1" width="5.2" height="20.9" fill="#2e3138"/><rect x="434.3" y="1.0" width="2.0" height="21.0" fill="#b8b2a4"/><rect x="341" y="-5" width="20" height="60" fill="#f6f5f2"/><rect x="257" y="22" width="180" height="7" fill="#f5f4f1"/><rect x="258" y="29" width="178" height="160" fill="#ebe9e4"/><rect x="395.0" y="50.6" width="4.0" height="53.4" fill="#3f5876"/><rect x="398.7" y="49.0" width="3.4" height="55.0" fill="#8ea5bb"/><rect x="401.8" y="49.4" width="4.7" height="54.6" fill="#dfe4e8"/><rect x="406.1" y="49.9" width="3.9" height="54.1" fill="#2b3036"/><rect x="409.8" y="49.9" width="5.3" height="54.1" fill="#dfe4e8"/><rect x="414.8" y="50.8" width="4.7" height="53.2" fill="#8ea5bb"/><rect x="419.2" y="49.4" width="4.1" height="54.6" fill="#b9c7d3"/><rect x="422.9" y="50.7" width="4.2" height="53.3" fill="#2b3036"/><rect x="426.8" y="49.3" width="5.1" height="54.7" fill="#3f5876"/><rect x="431.6" y="50.7" width="4.7" height="53.3" fill="#6d8cab"/><rect x="424" y="84" width="11" height="20" fill="#2b2d32"/><rect x="426" y="86" width="7" height="12" fill="#dcdcdc"/><rect x="395" y="104" width="42" height="7" fill="#f5f4f1"/><rect x="417" y="150" width="18" height="34" fill="#a9a644"/><rect x="417" y="150" width="7" height="34" fill="#5f6b3a"/><rect x="213.0" y="186.5" width="3.4" height="25.5" fill="#e9ece6"/><rect x="216.1" y="185.1" width="4.2" height="26.9" fill="#d8e0d4"/><rect x="220.0" y="186.7" width="5.0" height="25.3" fill="#d8e0d4"/><rect x="224.7" y="186.2" width="5.2" height="25.8" fill="#d8e0d4"/><rect x="229.6" y="185.9" width="3.9" height="26.1" fill="#86b88a"/><rect x="233.2" y="185.0" width="3.8" height="27.0" fill="#e9ece6"/><rect x="236.8" y="186.9" width="1.5" height="25.1" fill="#7aa37a"/><rect x="436" y="-5" width="25" height="385" fill="#f7f7f5"/><rect x="447.500" y="-5" width="1.500" height="385" fill="#e3e3e0"/><rect x="461" y="0" width="71" height="188" fill="#e9e7e2"/><rect x="461.0" y="0.1" width="4.3" height="20.9" fill="#c8ccd0"/><rect x="465.0" y="0.4" width="4.0" height="20.6" fill="#c8ccd0"/><rect x="468.6" y="0.9" width="4.4" height="20.1" fill="#7d8794"/><rect x="472.8" y="0.5" width="5.3" height="20.5" fill="#3c4a63"/><rect x="477.7" y="0.5" width="3.3" height="20.5" fill="#2d3038"/><rect x="480.8" y="1.2" width="3.7" height="19.8" fill="#1f2228"/><rect x="484.2" y="0.6" width="3.4" height="20.4" fill="#5b6c84"/><rect x="487.3" y="1.9" width="3.6" height="19.1" fill="#3c4a63"/><rect x="490.5" y="1.3" width="5.6" height="19.7" fill="#e6e6e4"/><rect x="495.8" y="1.2" width="5.7" height="19.8" fill="#3c4a63"/><rect x="501.1" y="2.0" width="4.3" height="19.0" fill="#5b6c84"/><rect x="505.1" y="1.2" width="4.2" height="19.8" fill="#5b6c84"/><rect x="508.9" y="1.7" width="3.4" height="19.3" fill="#7d8794"/><rect x="512.1" y="1.5" width="4.2" height="19.5" fill="#3c4a63"/><rect x="461" y="21.500" width="71" height="7" fill="#f6f5f2"/><rect x="461.0" y="49.7" width="5.8" height="26.3" fill="#9a9488"/><rect x="466.5" y="49.4" width="6.0" height="26.6" fill="#8b8578"/><rect x="472.2" y="48.8" width="6.8" height="27.2" fill="#4d5056"/><rect x="478.7" y="49.1" width="6.3" height="26.9" fill="#b6a27a"/><rect x="484.7" y="47.1" width="4.6" height="28.9" fill="#4d5056"/><rect x="489.0" y="47.3" width="5.4" height="28.7" fill="#6f7379"/><rect x="494.1" y="48.9" width="6.0" height="27.1" fill="#4d5056"/><rect x="461" y="75" width="38" height="28.500" fill="#7d7a74"/><rect x="464" y="78" width="32" height="22" fill="#e3e2df"/><rect x="468" y="82" width="10" height="14" fill="#9a9a98"/><rect x="481" y="84" width="9" height="12" fill="#b5b5b2"/><rect x="500" y="56" width="8" height="47" fill="#d8c23a"/><rect x="496" y="47" width="5" height="29" fill="#3a3d40"/><rect x="508" y="48" width="7" height="55" fill="#6f8f6a"/><rect x="514" y="45" width="5" height="57" fill="#3f62a3"/><rect x="519" y="44" width="6" height="57" fill="#eceae6"/><rect x="525" y="40" width="7" height="58" fill="#2a1f24"/><rect x="525" y="40" width="7" height="8" fill="#a32a38"/><rect x="526" y="88" width="5" height="8" fill="#b23a45"/><rect x="461" y="103" width="71" height="7" fill="#f6f5f2"/><rect x="497.0" y="121.2" width="5.1" height="59.8" fill="#6b7fae"/><rect x="501.8" y="124.0" width="3.8" height="57.0" fill="#565a66"/><rect x="505.3" y="124.5" width="6.1" height="56.5" fill="#3e4a3f"/><rect x="511.2" y="120.3" width="5.4" height="60.7" fill="#565a66"/><rect x="516.3" y="124.0" width="5.0" height="57.0" fill="#6b7fae"/><rect x="521.0" y="123.8" width="4.4" height="57.2" fill="#c9cdd6"/><rect x="525.1" y="124.9" width="5.2" height="56.1" fill="#2a2c30"/><rect x="461" y="129.500" width="60" height="52" fill="#8e8068"/><rect x="463.500" y="133" width="54" height="45" fill="#c8473a"/><rect x="463.500" y="133" width="54" height="14" fill="#b7473c"/><rect x="463.500" y="147" width="54" height="12" fill="#e08a6c"/><rect x="463.500" y="160" width="54" height="18" fill="#b3342e"/><rect x="489" y="150" width="5" height="24" fill="#7b6a4a"/><rect x="461" y="181" width="71" height="7" fill="#f6f5f2"/><rect x="532" y="-5" width="27" height="385" fill="#f8f8f7"/><rect x="545" y="-5" width="1.500" height="385" fill="#e3e3e1"/><rect x="559" y="0" width="70" height="188" fill="#e7e5e0"/><rect x="561.0" y="0.2" width="6.3" height="19.8" fill="#1f2124"/><rect x="567.0" y="1.2" width="6.1" height="18.8" fill="#b98f96"/><rect x="572.8" y="0.3" width="4.0" height="19.7" fill="#1f2124"/><rect x="576.6" y="1.4" width="5.8" height="18.6" fill="#26282c"/><rect x="582.0" y="0.0" width="5.5" height="20.0" fill="#2a2d2f"/><rect x="587.2" y="1.9" width="5.3" height="18.1" fill="#c9a9ae"/><rect x="592.2" y="1.4" width="5.9" height="18.6" fill="#1f2124"/><rect x="597.8" y="0.6" width="5.9" height="19.4" fill="#7fb0a8"/><rect x="603.4" y="0.2" width="5.2" height="19.8" fill="#e9e6df"/><rect x="608.3" y="2.0" width="4.4" height="18.0" fill="#7fb0a8"/><rect x="612.4" y="0.9" width="3.9" height="19.1" fill="#e9e6df"/><rect x="615.9" y="0.9" width="6.7" height="19.1" fill="#1f2124"/><rect x="622.3" y="1.8" width="5.0" height="18.2" fill="#b98f96"/><rect x="627.0" y="0.2" width="2.3" height="19.8" fill="#e9e6df"/><rect x="559" y="20.500" width="70" height="7" fill="#f6f5f2"/><rect x="559.0" y="46.8" width="4.0" height="53.2" fill="#a8456f"/><rect x="562.7" y="47.5" width="5.4" height="52.5" fill="#23252b"/><rect x="567.7" y="46.2" width="5.1" height="53.8" fill="#101114"/><rect x="572.5" y="45.8" width="4.3" height="54.2" fill="#101114"/><rect x="576.4" y="47.0" width="5.0" height="53.0" fill="#dcdad6"/><rect x="581.2" y="46.7" width="3.7" height="53.3" fill="#4a3140"/><rect x="584.5" y="46.7" width="3.6" height="53.3" fill="#4a3140"/><rect x="587.8" y="49.2" width="5.2" height="50.8" fill="#23252b"/><rect x="592.7" y="46.0" width="5.6" height="54.0" fill="#1c1d22"/><rect x="598.0" y="46.4" width="5.6" height="53.6" fill="#4a3140"/><rect x="603.3" y="47.0" width="3.5" height="53.0" fill="#a8456f"/><rect x="606.4" y="49.6" width="3.5" height="50.4" fill="#15161a"/><rect x="609.6" y="46.4" width="5.4" height="53.6" fill="#1c1d22"/><rect x="614.8" y="46.4" width="5.4" height="53.6" fill="#2b2f45"/><rect x="619.9" y="46.3" width="3.9" height="53.7" fill="#8a2f5a"/><rect x="623.5" y="48.9" width="4.1" height="51.1" fill="#1f2a44"/><rect x="559" y="100.500" width="70" height="7" fill="#f6f5f2"/><rect x="557" y="108" width="70" height="70" fill="#15161a"/><rect x="560.0" y="118.5" width="7.0" height="57.5" fill="#101114"/><rect x="566.7" y="119.5" width="7.0" height="56.5" fill="#e4e2de"/><rect x="573.4" y="112.4" width="6.5" height="63.6" fill="#101114"/><rect x="579.6" y="118.0" width="5.7" height="58.0" fill="#17181c"/><rect x="584.9" y="119.3" width="5.8" height="56.7" fill="#23283a"/><rect x="590.4" y="115.3" width="4.8" height="60.7" fill="#17181c"/><rect x="594.9" y="117.9" width="5.2" height="58.1" fill="#17181c"/><rect x="599.8" y="113.9" width="5.5" height="62.1" fill="#0e0f12"/><rect x="605.0" y="115.2" width="6.0" height="60.8" fill="#23283a"/><rect x="610.7" y="112.6" width="6.2" height="63.4" fill="#0e0f12"/><rect x="616.6" y="115.6" width="6.0" height="60.4" fill="#2a2c3a"/><rect x="622.2" y="115.6" width="3.1" height="60.4" fill="#23283a"/><circle cx="596" cy="152.500" r="14" fill="#e3e3e6"/><path d="M583 156L608 146" stroke="#b5b5bb" stroke-width="1.500"/><rect x="588" y="166" width="16" height="10" fill="#101114"/><rect x="559" y="178" width="70" height="10" fill="#f6f5f2"/><rect x="629" y="-5" width="20" height="385" fill="#f8f8f7"/><rect x="638.500" y="-5" width="1.500" height="385" fill="#e3e3e1"/><rect x="649" y="0" width="20" height="188" fill="#e7e5e0"/><rect x="649.0" y="0.5" width="4.9" height="19.5" fill="#2b2f45"/><rect x="653.6" y="0.2" width="4.3" height="19.8" fill="#3a2530"/><rect x="657.7" y="1.6" width="4.4" height="18.4" fill="#3a2530"/><rect x="661.8" y="1.5" width="6.0" height="18.5" fill="#4a3140"/><rect x="649" y="20.500" width="20" height="7" fill="#f6f5f2"/><rect x="649.0" y="50.0" width="4.8" height="50.0" fill="#8a3a4a"/><rect x="653.5" y="48.4" width="4.7" height="51.6" fill="#4a2d52"/><rect x="657.9" y="49.3" width="5.0" height="50.7" fill="#1c1d22"/><rect x="662.6" y="49.0" width="4.1" height="51.0" fill="#8a3a4a"/><rect x="666.5" y="50.6" width="1.8" height="49.4" fill="#6a3a6a"/><rect x="649" y="100.500" width="20" height="7" fill="#f6f5f2"/><rect x="649" y="120" width="20" height="56" fill="#16171b"/><circle cx="668" cy="155" r="14" fill="none" stroke="#cfd2d6" stroke-width="2"/><rect x="649" y="178" width="20" height="10" fill="#f6f5f2"/><rect x="436" y="188" width="234" height="192" fill="#e2e3e6"/><rect x="459" y="190" width="76" height="190" fill="#e9eaec"/><rect x="554" y="190" width="75" height="190" fill="#e6e7ea"/><rect x="650" y="190" width="20" height="190" fill="#e4e4e6"/><rect x="457" y="188" width="2.500" height="192" fill="#f6f6f8"/><rect x="535" y="188" width="2.500" height="192" fill="#f6f6f8"/><rect x="552" y="188" width="2.500" height="192" fill="#f6f6f8"/><rect x="629" y="188" width="2.500" height="192" fill="#f6f6f8"/><rect x="648" y="188" width="2.500" height="192" fill="#f6f6f8"/><rect x="446" y="188" width="1.300" height="192" fill="#cfd0d4"/><rect x="543.5" y="188" width="1.300" height="192" fill="#cfd0d4"/><rect x="545.5" y="188" width="1.300" height="192" fill="#cfd0d4"/><rect x="638" y="188" width="1.300" height="192" fill="#cfd0d4"/><rect x="640" y="188" width="1.300" height="192" fill="#cfd0d4"/><rect x="436" y="186" width="234" height="3" fill="#f8f8f8"/></g><g filter="url(#sf)"><path d="M122 380L135 345L150 315L166 299L200 280L246 253L300 300L340 340L375 300L405 240L440 252L490 271L515 300L535 340L558 380z" fill="url(#st)"/><path d="M122 380L135 345L150 315L166 299L200 280L246 253L262 270L215 330L190 380z" fill="url(#st3)"/><path d="M430 249L490 271L515 300L535 340L558 380H500L478 320L455 285z" fill="url(#st2)"/><path d="M405 240L440 252L490 271L470 268L430 262L395 268z" fill="#cfd5da" opacity="0.700"/><path d="M262 250L300 300L336 342L372 300L402 244L380 200L280 210z" fill="#e8c5b4"/><path d="M262 252L270 250L300 285L336 325L336 342L300 304z" fill="#6a3e33"/><path d="M336 342L336 326L360 300L385 262L402 244L376 300z" fill="#c99684" opacity="0.800"/><path d="M246 253L266 258L300 300L338 345L318 380L290 380L262 330L240 290z" fill="url(#st3)"/><path d="M405 240L376 300L338 345L352 372L372 350L398 300L414 262z" fill="url(#st)"/><path d="M338 345L318 380" stroke="#8a949c" stroke-width="1.500"/><path d="M236 165C232 180 236 200 244 208C247 232 258 262 280 285C300 304 330 312 352 304C378 294 400 262 410 232C416 215 420 200 422 183L417 160L350 130L300 128L256 150z" fill="url(#fc)"/><path d="M236 170C230 172 230 190 236 200L244 208L242 175z" fill="#e2b5a2"/><path d="M246.500 178C240 174 233 160 228 148C227 135 228 120 229 109C232 96 235 84 239 74C244 64 250 56 256.500 49.500C265 41 275 34 286 30C300 24 315 21 330.500 20C338 20 345 22 350.500 25C360 28 368 32 375 37C385 44 393 51 400 59.500C407 69 413 79 417 89C422 99 425 109 427 119C429 129 430 139 429.500 148C429 160 426 172 422 183C420 178 418 175 417 173C413 171 409 169 405 168C396 165 388 161 380 158C370 155 360 152 350.500 148.500C341 145 332 139 323 133.500C316 130 309 128 303.500 128.500C299 134 295 139 291 143.500C285 149 279 154 274 158C268 162 262 165 256.500 168C253 171 249 175 246.500 178z" fill="url(#hr)"/><path d="M303 128C290 110 288 80 300 50" stroke="#4a4f55" stroke-width="2.500" fill="none" opacity="0.700"/><path d="M250 150C255 120 268 90 290 60M262 160C268 135 278 115 292 100" stroke="#50555c" stroke-width="2" fill="none" opacity="0.600"/><path d="M300 128C302 118 306 108 312 100" stroke="#8a8e92" stroke-width="2" fill="none" opacity="0.600"/><path d="M335 24C360 50 390 90 410 140M350 40C375 70 395 105 412 150M320 30C345 60 370 100 392 150" stroke="#2f343a" stroke-width="2.500" fill="none" opacity="0.700"/><path d="M275 45C258 70 246 100 240 135M292 40C272 68 258 100 250 140" stroke="#454a50" stroke-width="2" fill="none" opacity="0.600"/><path d="M310 122C318 126 330 132 345 140" stroke="#5a5f66" stroke-width="1.800" fill="none" opacity="0.600"/><path d="M280 176C292 166 312 165 330 172" stroke="#4a3c38" stroke-width="4" fill="none" opacity="0.550" filter="url(#sf2)"/><path d="M368 170C382 164 398 167 410 176" stroke="#4a3c38" stroke-width="4" fill="none" opacity="0.550" filter="url(#sf2)"/><path d="M284 173C296 166 312 166 326 170" stroke="#5a4a44" stroke-width="2.500" fill="none" opacity="0.600"/><path d="M372 168C384 164 396 166 406 171" stroke="#5a4a44" stroke-width="2.500" fill="none" opacity="0.600"/><path d="M304 199C309 201.500 317 201.500 323 199.500" stroke="#3a2720" stroke-width="2" fill="none" opacity="0.850"/><path d="M375 198.500C380 200.500 388 200.500 394 198" stroke="#3a2720" stroke-width="2" fill="none" opacity="0.850"/><path d="M240 190C244 230 262 270 290 292C276 262 262 226 256 188z" fill="#c9917c" opacity="0.350" filter="url(#sf2)"/><path d="M418 190C414 226 398 262 376 288C392 256 402 222 408 186z" fill="#c9917c" opacity="0.300" filter="url(#sf2)"/><ellipse cx="311" cy="207.500" rx="27" ry="21" fill="#fff" fill-opacity="0.220" stroke="#55301f" stroke-width="2.400"/><ellipse cx="388.500" cy="205" rx="25" ry="21" fill="#fff" fill-opacity="0.220" stroke="#55301f" stroke-width="2.400"/><path d="M338 201C346 197 355 197 363.500 200" stroke="#9a6a4a" stroke-width="1.800" fill="none"/><path d="M269 201L284 205M413.500 200L426 195" stroke="#4a2f24" stroke-width="2"/><ellipse cx="345" cy="230" rx="13" ry="11" fill="#fdf3ee" opacity="0.750" filter="url(#sf2)"/><path d="M329 240C336 248 354 249 361 241" stroke="#c99885" stroke-width="2.500" fill="none" opacity="0.800"/><path d="M318 272C330 268 346 271 358 268C364 266.500 370 265 376 262C370 271 354 277 338 277C328 277 322 275 318 272z" fill="#8a4a40" opacity="0.900"/><path d="M324 271.500C338 270.500 352 270.500 368 265.500" stroke="#ead6cf" stroke-width="1.600" fill="none"/><path d="M326 281C336 285 350 285 362 280" stroke="#d9a896" stroke-width="3" fill="none" opacity="0.700"/><path d="M300 296C320 312 352 312 378 292" stroke="#c49583" stroke-width="3" fill="none" opacity="0.500"/></g></g><rect x="0" y="355.500" width="66" height="19.500" fill="#2a2a2a" fill-opacity="0.850"/><rect x="4" y="368" width="2" height="3.500" fill="#fff"/><rect x="7.500" y="365.500" width="2" height="6" fill="#fff"/><rect x="11" y="363" width="2" height="8.500" fill="#fff"/><rect x="14.500" y="360" width="2" height="11.500" fill="#fff"/><text x="23" y="370" font-size="12.500" fill="#fff" font-family="'Liberation Sans','Noto Sans CJK KR',sans-serif" textLength="36" lengthAdjust="spacing">윤진표</text></svg>


<svg style="position:absolute;left:33.0px;top:966.0px;" width="26" height="27" viewBox="0 0 26 27"><rect x="8.500" y="2.800" width="9" height="15" rx="4.500" fill="#c8c8c8"/><path d="M5.700 12.500a7.300 7.300 0 0 0 14.600 0" fill="none" stroke="#c8c8c8" stroke-width="1.800"/><path d="M13 20v4M8.500 24.600h9" stroke="#c8c8c8" stroke-width="1.800"/><path d="M1.500 24.800L24.500 2.400" stroke="#1a1a1a" stroke-width="4.500"/><path d="M1.500 24.800L24.500 2.400" stroke="#e0555a" stroke-width="2"/></svg>
<svg style="position:absolute;left:74.0px;top:977.5px;" width="8.5" height="5.5" viewBox="0 0 8.5 5.5"><path d="M0.800 4.800l3.450-3.600 3.450 3.600" fill="none" stroke="#d0d0d0" stroke-width="1.500"/></svg>
<div style="position:absolute;left:14.5px;top:996.3px;font-size:13.0px;line-height:13.0px;color:#d2d2d2;white-space:nowrap;font-family:'Liberation Sans','Noto Sans CJK KR',sans-serif;letter-spacing:-0.24px;">음소거 해제</div>
<svg style="position:absolute;left:126.0px;top:966.0px;" width="26" height="27" viewBox="0 0 26 27"><rect x="1.200" y="6.600" width="17" height="14.600" rx="3" fill="#c8c8c8"/><path d="M18.800 12l6-3.800v11.400l-6-3.800z" fill="#c8c8c8"/><path d="M1.600 24.800L24.600 2.400" stroke="#1a1a1a" stroke-width="4.500"/><path d="M1.600 24.800L24.600 2.400" stroke="#e0555a" stroke-width="2"/></svg>
<svg style="position:absolute;left:172.0px;top:977.5px;" width="8.5" height="5.5" viewBox="0 0 8.5 5.5"><path d="M0.800 4.800l3.450-3.600 3.450 3.600" fill="none" stroke="#d0d0d0" stroke-width="1.500"/></svg>
<div style="position:absolute;left:107.8px;top:996.3px;font-size:13.0px;line-height:13.0px;color:#d2d2d2;white-space:nowrap;font-family:'Liberation Sans','Noto Sans CJK KR',sans-serif;letter-spacing:-0.32px;">비디오 시작</div>
<svg style="position:absolute;left:822.0px;top:970.5px;" width="26" height="19" viewBox="0 0 26 19"><circle cx="7.800" cy="5.200" r="4.200" fill="#c8c8c8"/><path d="M0.500 18c0-5.500 3-8 7.300-8s7.300 2.500 7.300 8z" fill="#c8c8c8"/><circle cx="18.600" cy="6.400" r="3.500" fill="#c8c8c8"/><path d="M16.500 18c0-3-0.800-5-2-6.400c1-0.700 2.500-1 4-1c4 0 6.800 2.200 6.800 7.400z" fill="#c8c8c8"/></svg>
<div style="position:absolute;left:851.5px;top:971.6px;font-size:12.5px;line-height:12.5px;color:#e0e0e0;white-space:nowrap;font-family:'Liberation Sans','Noto Sans CJK KR',sans-serif;letter-spacing:-0.20px;">28</div>
<svg style="position:absolute;left:884.0px;top:977.5px;" width="8.5" height="5.5" viewBox="0 0 8.5 5.5"><path d="M0.800 4.800l3.450-3.600 3.450 3.600" fill="none" stroke="#d0d0d0" stroke-width="1.500"/></svg>
<div style="position:absolute;left:817.5px;top:996.3px;font-size:13.0px;line-height:13.0px;color:#d2d2d2;white-space:nowrap;font-family:'Liberation Sans','Noto Sans CJK KR',sans-serif;letter-spacing:-0.13px;">참가자</div>
<svg style="position:absolute;left:929.5px;top:971.0px;" width="21" height="19" viewBox="0 0 21 19"><path d="M3.500 0.500h14a3 3 0 0 1 3 3v7.500a3 3 0 0 1-3 3h-8.500l-4.500 4v-4h-1a3 3 0 0 1-3-3v-7.500a3 3 0 0 1 3-3z" fill="#c8c8c8"/></svg>
<div style="position:absolute;left:928.2px;top:996.3px;font-size:13.0px;line-height:13.0px;color:#d2d2d2;white-space:nowrap;font-family:'Liberation Sans','Noto Sans CJK KR',sans-serif;letter-spacing:-0.21px;">채팅</div>
<svg style="position:absolute;left:1016.5px;top:971.0px;" width="25" height="18.5" viewBox="0 0 25 18.5"><rect x="0.500" y="0.300" width="24" height="17.600" rx="3" fill="#23d959"/><path d="M12.500 13.500v-8.500M8.800 8.300l3.700-3.700 3.700 3.700" fill="none" stroke="#0b3a1a" stroke-width="1.900"/></svg>
<div style="position:absolute;left:1003.2px;top:996.3px;font-size:13.0px;line-height:13.0px;color:#23d959;white-space:nowrap;font-family:'Liberation Sans','Noto Sans CJK KR',sans-serif;letter-spacing:-0.19px;">화면 공유</div>
<svg style="position:absolute;left:1107.0px;top:969.5px;" width="21" height="21" viewBox="0 0 21 21"><circle cx="10.500" cy="10.500" r="9.200" fill="none" stroke="#c8c8c8" stroke-width="1.600"/><circle cx="10.500" cy="10.500" r="6.600" fill="#c8c8c8"/></svg>
<div style="position:absolute;left:1106.0px;top:996.3px;font-size:13.0px;line-height:13.0px;color:#d2d2d2;white-space:nowrap;font-family:'Liberation Sans','Noto Sans CJK KR',sans-serif;letter-spacing:-0.21px;">기록</div>
<svg style="position:absolute;left:1188.0px;top:968.5px;" width="23" height="22" viewBox="0 0 23 22"><circle cx="9.800" cy="12.700" r="8.800" fill="#c8c8c8"/><circle cx="6.800" cy="10.800" r="1.200" fill="#1a1a1a"/><circle cx="12.800" cy="10.800" r="1.200" fill="#1a1a1a"/><path d="M5.800 14.500c2 2.800 6 2.800 8 0" fill="none" stroke="#1a1a1a" stroke-width="1.300"/><circle cx="18" cy="4.500" r="4.800" fill="#1a1a1a"/><path d="M18 1.200v6.600M14.700 4.500h6.600" stroke="#c8c8c8" stroke-width="1.500"/></svg>
<div style="position:absolute;left:1186.2px;top:996.3px;font-size:13.0px;line-height:13.0px;color:#d2d2d2;white-space:nowrap;font-family:'Liberation Sans','Noto Sans CJK KR',sans-serif;letter-spacing:-0.21px;">반응</div>
<div style="position:absolute;left:1847.0px;top:976.0px;width:61.0px;height:27.0px;background:#c8262c;border-radius:7px;"></div>
<div style="position:absolute;left:1859.5px;top:982.6px;font-size:12.5px;line-height:12.5px;color:#fff;white-space:nowrap;font-family:'Liberation Sans','Noto Sans CJK KR',sans-serif;letter-spacing:-0.01px;font-weight:500;">나가기</div>


</body>
</html>
